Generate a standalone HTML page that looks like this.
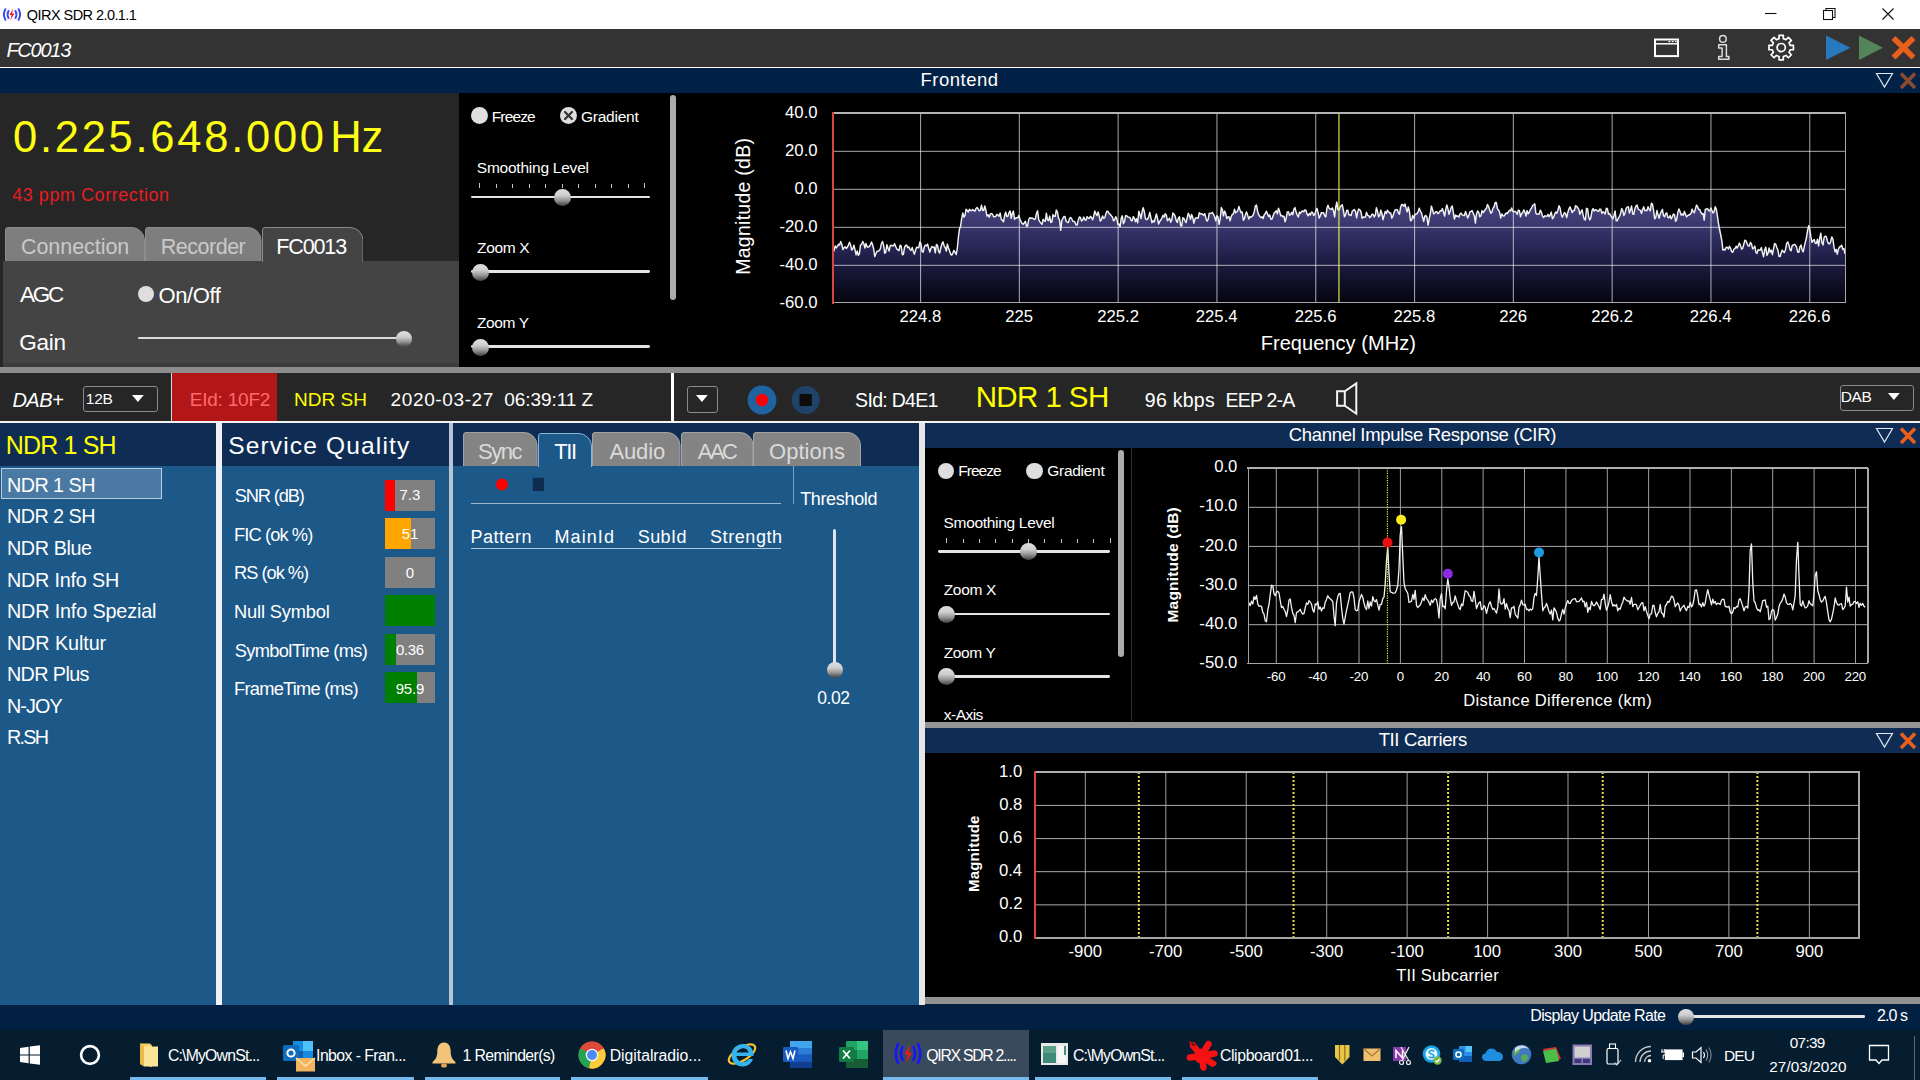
<!DOCTYPE html>
<html><head><meta charset="utf-8"><title>QIRX SDR</title>
<style>
html,body{margin:0;padding:0;background:#000;}
body{width:1920px;height:1080px;overflow:hidden;position:relative;font-family:"Liberation Sans",sans-serif;}
#r{position:absolute;left:0;top:0;width:1920px;height:1080px;overflow:hidden;}
#r div,#r span,#r svg{position:absolute;}
#r span{white-space:pre;line-height:1;display:block;}
.th{border-radius:50%;background:linear-gradient(180deg,#e0e0e0 0%,#cdcdcd 38%,#939393 68%,#585858 90%,#4a4a4a 100%);}
.rd{border-radius:50%;background:#dedede;}
</style></head><body><div id="r">
<div style="left:0px;top:0px;width:1920px;height:29px;background:#fff;"></div>
<div style="left:0px;top:29px;width:1920px;height:38px;background:#333333;"></div>
<div style="left:0px;top:67px;width:1920px;height:1px;background:#fff;"></div>
<div style="left:0px;top:68px;width:1920px;height:25px;background:#022146;"></div>
<div style="left:0px;top:93px;width:459px;height:274px;background:#262626;"></div>
<div style="left:459px;top:93px;width:1461px;height:274px;background:#000;"></div>
<div style="left:3px;top:261px;width:456px;height:106px;background:#444;"></div>
<div style="left:3px;top:363px;width:456px;height:4px;background:#3c3c3c;"></div>
<div style="left:0px;top:367px;width:1920px;height:6px;background:#8c8c8c;"></div>
<div style="left:0px;top:373px;width:1920px;height:48px;background:#262626;"></div>
<div style="left:0px;top:421px;width:1920px;height:1.6px;background:#f4f4f4;"></div>
<div style="left:671px;top:373px;width:3px;height:48px;background:#fff;"></div>
<div style="left:0px;top:423px;width:216px;height:43px;background:#0f2d54;"></div>
<div style="left:0px;top:466px;width:216px;height:539px;background:#1c5888;"></div>
<div style="left:216px;top:423px;width:6px;height:582px;background:#f0f0f5;"></div>
<div style="left:222px;top:423px;width:227px;height:43px;background:#0f2d54;"></div>
<div style="left:222px;top:466px;width:227px;height:539px;background:#1c5888;"></div>
<div style="left:449px;top:423px;width:4px;height:582px;background:#b9c3d6;"></div>
<div style="left:453px;top:423px;width:466px;height:43px;background:#0f2d54;"></div>
<div style="left:453px;top:466px;width:466px;height:539px;background:#1c5888;"></div>
<div style="left:919px;top:423px;width:6px;height:582px;background:#e6e6e8;"></div>
<div style="left:925px;top:423px;width:995px;height:25px;background:#0f2d54;"></div>
<div style="left:925px;top:448px;width:995px;height:273px;background:#000;"></div>
<div style="left:925px;top:722px;width:995px;height:6px;background:#949494;"></div>
<div style="left:925px;top:728px;width:995px;height:25px;background:#0f2d54;"></div>
<div style="left:925px;top:753px;width:995px;height:244px;background:#000;"></div>
<div style="left:925px;top:997px;width:995px;height:7px;background:#929292;"></div>
<div style="left:0px;top:1005px;width:925px;height:25px;background:#022142;"></div>
<div style="left:925px;top:1004px;width:995px;height:26px;background:#022142;"></div>
<div style="left:0px;top:1030px;width:1920px;height:50px;background:#061d2f;"></div>
<svg style="left:2px;top:7.5px;" width="20" height="13" viewBox="0 0 20 13"><g fill="none" stroke="#3c4cf2" stroke-width="2" stroke-linecap="round"><path d="M6.5 3 Q4.6 6.5 6.5 10"/><path d="M3.4 1.2 Q0.4 6.5 3.4 11.8"/><path d="M13.500 3 Q15.400 6.500 13.500 10"/><path d="M16.600 1.200 Q19.600 6.500 16.600 11.800"/></g><path d="M11.2 0.6 L7.4 7.1 L9.7 7.1 L8.2 12.4 L12.4 5.500 L10 5.500 Z" fill="#f01818"/></svg>
<span style="left:26.85px;top:8.00px;font-size:14.5px;color:#000;letter-spacing:-0.560px;">QIRX SDR 2.0.1.1</span>
<svg style="left:1760px;top:4px;" width="140" height="22" viewBox="0 0 140 22"><g stroke="#111" stroke-width="1.1" fill="none"><path d="M5 9.5 H16.5"/><rect x="63.5" y="6.5" width="9" height="9"/><path d="M66 6.5 V4.5 H75 V13.5 H72.5"/><path d="M122.5 4.5 L133.5 15.5 M133.5 4.5 L122.5 15.5"/></g></svg>
<span style="left:6.40px;top:40.00px;font-size:20px;color:#fff;letter-spacing:-1.236px;font-style:italic;">FC0013</span>
<svg style="left:1652px;top:36px;" width="30" height="24" viewBox="0 0 30 24"><g fill="none" stroke="#fff"><rect x="3" y="3.5" width="23" height="16.6" stroke-width="2"/><path d="M3 7.8 H26" stroke-width="1.5"/></g><path d="M16.5 5.6 h1.8 M19.8 5.6 h1.8 M23 5.6 h1.5" stroke="#fff" stroke-width="1.1"/></svg>
<svg style="left:1714px;top:33px;" width="20" height="30" viewBox="0 0 20 30"><g fill="none" stroke="#ddd" stroke-width="1.5" stroke-linejoin="round"><circle cx="8.9" cy="5.9" r="3.3"/><path d="M4.7 11.8 H12.4 V23.4 H14.9 V26.2 H4.7 V23.4 H8.1 V15 H4.7 Z"/></g></svg>
<svg style="left:1766px;top:33px;" width="30" height="30" viewBox="0 0 30 30"><path d="M13.07 2.38 L17.33 2.38 L17.35 5.65 L20.01 6.76 L22.33 4.45 L25.35 7.47 L23.04 9.79 L24.15 12.45 L27.42 12.47 L27.42 16.73 L24.15 16.75 L23.04 19.41 L25.35 21.73 L22.33 24.75 L20.01 22.44 L17.35 23.55 L17.33 26.82 L13.07 26.82 L13.05 23.55 L10.39 22.44 L8.07 24.75 L5.05 21.73 L7.36 19.41 L6.25 16.75 L2.98 16.73 L2.98 12.47 L6.25 12.45 L7.36 9.79 L5.05 7.47 L8.07 4.45 L10.39 6.76 L13.05 5.65 Z" fill="none" stroke="#fff" stroke-width="1.7" stroke-linejoin="round"/><circle cx="15.2" cy="14.6" r="4.1" fill="none" stroke="#fff" stroke-width="1.7"/></svg>
<svg style="left:1824px;top:33px;" width="96" height="30" viewBox="0 0 96 30"><path d="M2 2.6 L26.5 14.8 L2 27 Z" fill="#2878be"/><path d="M35 2.6 L59 14.8 L35 27 Z" fill="#54855a"/><path d="M69.5 5 L89.5 24.6 M89.5 5 L69.5 24.6" stroke="#e8601c" stroke-width="5.6" stroke-linecap="butt"/></svg>
<span style="left:920.52px;top:71.00px;font-size:18.5px;color:#fff;letter-spacing:0.509px;">Frontend</span>
<svg style="left:1874px;top:71px;" width="46" height="20" viewBox="0 0 46 20"><path d="M2.5 2.5 H18.5 L10.5 16 Z" fill="none" stroke="#dfe8f4" stroke-width="1.2"/><path d="M27 2.5 L41 17 M41 2.5 L27 17" stroke="#8a4a30" stroke-width="3.6"/></svg>
<svg style="left:1874px;top:425.5px;" width="46" height="20" viewBox="0 0 46 20"><path d="M2.5 2.5 H18.5 L10.5 16 Z" fill="none" stroke="#dfe8f4" stroke-width="1.2"/><path d="M27 2.5 L41 17 M41 2.5 L27 17" stroke="#e8601c" stroke-width="3.6"/></svg>
<svg style="left:1874px;top:730.5px;" width="46" height="20" viewBox="0 0 46 20"><path d="M2.5 2.5 H18.5 L10.5 16 Z" fill="none" stroke="#dfe8f4" stroke-width="1.2"/><path d="M27 2.5 L41 17 M41 2.5 L27 17" stroke="#e8601c" stroke-width="3.6"/></svg>
<span style="left:12.98px;top:116.00px;font-size:43.5px;color:#ffff14;letter-spacing:2.742px;">0.225.648.000</span>
<span style="left:330.27px;top:116.00px;font-size:43.5px;color:#ffff14;letter-spacing:-0.228px;">Hz</span>
<span style="left:12.14px;top:186.00px;font-size:18px;color:#e81c24;letter-spacing:0.555px;">43 ppm Correction</span>
<svg style="left:5px;top:227px;" width="140" height="34" viewBox="0 0 140 34"><path d="M0.5 34 V3 Q0.5 0.5 3 0.5 H127 A13 13 0 0 1 139.5 13 V34" fill="#7e7e7e" stroke="#8c8c8c" stroke-width="1"/></svg>
<svg style="left:145px;top:227px;" width="116.5" height="34" viewBox="0 0 116.5 34"><path d="M0.5 34 V3 Q0.5 0.5 3 0.5 H103.5 A13 13 0 0 1 116.0 13 V34" fill="#7e7e7e" stroke="#8c8c8c" stroke-width="1"/></svg>
<svg style="left:261.5px;top:227px;" width="101.5" height="35" viewBox="0 0 101.5 35"><path d="M0.5 35 V3 Q0.5 0.5 3 0.5 H88.5 A13 13 0 0 1 101.0 13 V35" fill="#444" stroke="#8a8a8a" stroke-width="1"/></svg>
<span style="left:20.93px;top:237.00px;font-size:21.5px;color:#c9c9c9;letter-spacing:-0.043px;">Connection</span>
<span style="left:160.78px;top:237.00px;font-size:21.5px;color:#c9c9c9;letter-spacing:-0.490px;">Recorder</span>
<span style="left:276.28px;top:237.00px;font-size:21.5px;color:#fff;letter-spacing:-1.127px;">FC0013</span>
<span style="left:20.00px;top:284.00px;font-size:22.5px;color:#fff;letter-spacing:-2.261px;">AGC</span>
<div class="rd" style="left:137.7px;top:286.1px;width:16.2px;height:16.2px"></div>
<span style="left:158.51px;top:285.00px;font-size:22px;color:#fff;letter-spacing:-0.421px;">On/Off</span>
<span style="left:19.18px;top:332.00px;font-size:22.5px;color:#fff;letter-spacing:-0.209px;">Gain</span>
<div style="left:138px;top:336.6px;width:266px;height:2.8px;background:#dcdcdc;border-radius:1.4px;"></div>
<div class="th" style="left:395.8px;top:330.5px;width:16px;height:16px"></div>
<div class="rd" style="left:470.5px;top:107.1px;width:17px;height:17px"></div>
<span style="left:491.76px;top:109.00px;font-size:15.5px;color:#fff;letter-spacing:-0.873px;">Freeze</span>
<div class="rd" style="left:559.5px;top:107.1px;width:17px;height:17px"></div>
<svg style="left:559.5px;top:107.1px;" width="17" height="17" viewBox="0 0 17 17"><path d="M5 5 L12 12 M12 5 L5 12" stroke="#333" stroke-width="2.2" stroke-linecap="round"/></svg>
<span style="left:580.98px;top:109.00px;font-size:15.5px;color:#fff;letter-spacing:-0.233px;">Gradient</span>
<span style="left:476.80px;top:160.00px;font-size:15.5px;color:#fff;letter-spacing:-0.236px;">Smoothing Level</span>
<div style="left:479.0px;top:182.6px;width:1px;height:5.4px;background:#c4c4c4;"></div>
<div style="left:495.5px;top:184.2px;width:1px;height:3.8px;background:#c4c4c4;"></div>
<div style="left:512.0px;top:184.2px;width:1px;height:3.8px;background:#c4c4c4;"></div>
<div style="left:528.5px;top:184.2px;width:1px;height:3.8px;background:#c4c4c4;"></div>
<div style="left:545.0px;top:184.2px;width:1px;height:3.8px;background:#c4c4c4;"></div>
<div style="left:561.5px;top:184.2px;width:1px;height:3.8px;background:#c4c4c4;"></div>
<div style="left:578.0px;top:184.2px;width:1px;height:3.8px;background:#c4c4c4;"></div>
<div style="left:594.5px;top:184.2px;width:1px;height:3.8px;background:#c4c4c4;"></div>
<div style="left:611.0px;top:184.2px;width:1px;height:3.8px;background:#c4c4c4;"></div>
<div style="left:627.5px;top:184.2px;width:1px;height:3.8px;background:#c4c4c4;"></div>
<div style="left:644.0px;top:182.6px;width:1px;height:5.4px;background:#c4c4c4;"></div>
<div style="left:471px;top:195.5px;width:179px;height:2.8px;background:#e4e4e4;border-radius:1.4px;"></div>
<div class="th" style="left:553.5px;top:188.9px;width:17px;height:17px"></div>
<span style="left:477.04px;top:240.00px;font-size:15.5px;color:#fff;letter-spacing:-0.358px;">Zoom X</span>
<div style="left:471px;top:270.40000000000003px;width:179px;height:2.8px;background:#e4e4e4;border-radius:1.4px;"></div>
<div class="th" style="left:471.5px;top:263.8px;width:17px;height:17px"></div>
<span style="left:477.04px;top:315.00px;font-size:15.5px;color:#fff;letter-spacing:-0.392px;">Zoom Y</span>
<div style="left:471px;top:345.40000000000003px;width:179px;height:2.8px;background:#e4e4e4;border-radius:1.4px;"></div>
<div class="th" style="left:471.5px;top:338.8px;width:17px;height:17px"></div>
<div style="left:670px;top:95px;width:6px;height:205px;background:#ababab;border-radius:3px;"></div>
<svg style="left:833px;top:113px;" width="1012" height="189.5" viewBox="0 0 1012 189.5"><defs><linearGradient id="g1" gradientUnits="userSpaceOnUse" x1="0" y1="92" x2="0" y2="189.5"><stop offset="0.000" stop-color="rgb(72,69,130)"/><stop offset="0.164" stop-color="rgb(60,58,112)"/><stop offset="0.400" stop-color="rgb(42,40,88)"/><stop offset="0.564" stop-color="rgb(30,29,68)"/><stop offset="0.677" stop-color="rgb(24,23,55)"/><stop offset="0.821" stop-color="rgb(14,14,36)"/><stop offset="1.000" stop-color="rgb(5,5,16)"/></linearGradient></defs><polygon points="0,189.5 0.0,139.0 1.1,137.5 2.2,132.9 3.3,134.9 4.4,133.4 5.5,131.2 6.6,132.1 7.7,128.4 8.8,131.2 9.9,136.6 11.0,134.8 12.1,133.8 13.2,135.4 14.3,134.4 15.4,132.1 16.5,129.2 17.6,132.1 18.7,137.1 19.8,135.9 20.9,132.2 22.0,136.8 23.1,141.9 24.2,138.0 25.3,142.2 26.4,140.8 27.5,131.9 28.6,131.6 29.7,128.5 30.8,130.5 31.9,135.0 33.0,130.6 34.1,133.8 35.2,134.2 36.3,133.5 37.4,131.8 38.5,129.0 39.6,131.8 40.7,136.2 41.8,143.6 42.9,140.7 44.0,138.2 45.1,138.2 46.2,137.6 47.3,135.8 48.4,130.7 49.5,128.5 50.6,132.4 51.7,140.3 52.8,139.2 53.9,131.7 55.0,135.3 56.1,138.1 57.2,132.7 58.3,132.3 59.4,132.8 60.5,132.9 61.6,130.7 62.7,133.4 63.8,136.0 64.9,137.0 66.0,137.6 67.1,132.2 68.2,133.0 69.3,141.7 70.4,141.3 71.5,134.3 72.6,132.5 73.7,132.1 74.8,134.7 75.9,133.9 77.0,136.5 78.1,137.4 79.2,134.5 80.3,138.4 81.4,141.3 82.5,137.3 83.6,134.3 84.7,134.5 85.8,134.7 86.9,128.9 88.0,131.0 89.1,138.7 90.2,139.1 91.3,133.8 92.4,132.1 93.5,132.8 94.6,131.1 95.7,135.3 96.8,139.1 97.9,135.5 99.0,133.5 100.1,134.6 101.2,134.0 102.3,139.8 103.4,131.5 104.5,132.3 105.6,138.2 106.7,140.1 107.8,134.7 108.9,130.9 110.0,128.8 111.1,132.8 112.2,134.5 113.3,138.1 114.4,131.1 115.5,134.9 116.6,138.1 117.7,141.3 118.8,142.1 119.9,139.9 121.0,137.3 122.1,139.4 123.2,141.5 124.3,135.3 125.4,124.0 126.5,115.9 127.6,113.0 128.7,105.4 129.8,99.9 130.9,104.0 132.0,102.6 133.1,96.3 134.2,97.5 135.3,98.9 136.4,96.2 137.5,97.5 138.6,97.6 139.7,96.6 140.8,97.5 141.9,98.1 143.0,95.5 144.1,94.4 145.2,96.0 146.3,97.9 147.4,97.2 148.5,92.2 149.6,97.4 150.7,97.3 151.8,93.0 152.9,97.4 154.0,103.1 155.1,101.7 156.2,104.2 157.3,100.9 158.4,100.5 159.5,101.2 160.6,103.8 161.7,103.7 162.8,103.3 163.9,101.3 165.0,102.0 166.1,103.3 167.2,100.1 168.3,106.5 169.4,107.1 170.5,109.0 171.6,102.7 172.7,99.1 173.8,103.6 174.9,103.4 176.0,99.8 177.1,97.9 178.2,105.3 179.3,100.5 180.4,98.1 181.5,106.2 182.6,105.2 183.7,104.8 184.8,104.9 185.9,102.4 187.0,106.3 188.1,108.9 189.2,110.5 190.3,111.3 191.4,109.8 192.5,108.3 193.6,113.4 194.7,112.6 195.8,106.1 196.9,104.7 198.0,105.4 199.1,105.0 200.2,105.7 201.3,106.4 202.4,105.8 203.5,100.2 204.6,97.8 205.7,106.6 206.8,108.8 207.9,110.1 209.0,111.3 210.1,106.3 211.2,107.7 212.3,108.3 213.4,100.2 214.5,107.0 215.6,107.7 216.7,103.1 217.8,109.5 218.9,108.8 220.0,101.6 221.1,103.3 222.2,103.3 223.3,97.0 224.4,99.0 225.5,105.1 226.6,107.0 227.7,117.3 228.8,107.6 229.9,105.3 231.0,103.5 232.1,103.8 233.2,108.5 234.3,109.2 235.4,109.6 236.5,105.6 237.6,104.5 238.7,105.7 239.8,108.2 240.9,108.4 242.0,109.4 243.1,111.9 244.2,111.8 245.3,106.9 246.4,103.9 247.5,104.7 248.6,108.1 249.7,107.0 250.8,104.1 251.9,106.8 253.0,107.3 254.1,103.6 255.2,105.2 256.3,105.3 257.4,103.3 258.5,104.5 259.6,106.8 260.7,103.2 261.8,98.1 262.9,100.6 264.0,102.6 265.1,98.9 266.2,102.9 267.3,108.0 268.4,106.9 269.5,102.9 270.6,105.3 271.7,104.9 272.8,101.1 273.9,98.2 275.0,98.4 276.1,100.5 277.2,101.3 278.3,102.8 279.4,103.9 280.5,107.8 281.6,107.0 282.7,103.7 283.8,105.8 284.9,111.3 286.0,111.1 287.1,113.6 288.2,105.3 289.3,102.8 290.4,110.7 291.5,108.7 292.6,102.7 293.7,102.7 294.8,103.9 295.9,104.3 297.0,104.4 298.1,107.5 299.2,107.7 300.3,103.6 301.4,105.1 302.5,108.8 303.6,105.8 304.7,109.7 305.8,98.2 306.9,101.2 308.0,105.6 309.1,98.8 310.2,94.7 311.3,98.6 312.4,105.5 313.5,106.7 314.6,106.1 315.7,103.7 316.8,99.5 317.9,104.9 319.0,109.8 320.1,107.6 321.2,109.1 322.3,105.0 323.4,100.9 324.5,105.4 325.6,111.0 326.7,108.5 327.8,107.0 328.9,105.1 330.0,102.3 331.1,104.2 332.2,100.8 333.3,101.9 334.4,107.7 335.5,106.6 336.6,105.1 337.7,109.3 338.8,107.0 339.9,100.1 341.0,101.2 342.1,103.1 343.2,107.4 344.3,109.5 345.4,104.9 346.5,103.8 347.6,112.5 348.7,113.0 349.8,104.8 350.9,105.4 352.0,107.8 353.1,109.6 354.2,104.6 355.3,100.3 356.4,102.5 357.5,106.3 358.6,101.5 359.7,104.2 360.8,110.2 361.9,106.2 363.0,104.7 364.1,105.0 365.2,105.0 366.3,99.7 367.4,100.9 368.5,100.6 369.6,101.4 370.7,102.3 371.8,100.6 372.9,105.2 374.0,108.2 375.1,106.6 376.2,100.3 377.3,100.4 378.4,100.1 379.5,99.5 380.6,101.6 381.7,104.0 382.8,107.9 383.9,102.7 385.0,104.0 386.1,111.4 387.2,105.9 388.3,94.5 389.4,96.9 390.5,102.8 391.6,98.1 392.7,100.3 393.8,105.6 394.9,103.9 396.0,103.8 397.1,107.9 398.2,103.7 399.3,101.4 400.4,100.8 401.5,96.2 402.6,99.7 403.7,99.0 404.8,97.6 405.9,93.4 407.0,96.9 408.1,99.8 409.2,98.9 410.3,107.2 411.4,105.7 412.5,101.4 413.6,98.9 414.7,102.4 415.8,106.1 416.9,103.5 418.0,104.3 419.1,103.3 420.2,102.0 421.3,98.4 422.4,92.8 423.5,92.1 424.6,98.2 425.7,101.6 426.8,103.4 427.9,104.6 429.0,103.7 430.1,105.6 431.2,101.8 432.3,100.6 433.4,98.2 434.5,100.7 435.6,103.6 436.7,101.9 437.8,106.1 438.9,106.2 440.0,103.2 441.1,100.1 442.2,99.0 443.3,97.7 444.4,100.8 445.5,95.2 446.6,98.4 447.7,102.8 448.8,102.4 449.9,103.7 451.0,103.3 452.1,108.8 453.2,105.2 454.3,98.9 455.4,98.8 456.5,102.2 457.6,101.6 458.7,99.3 459.8,101.7 460.9,95.9 462.0,94.6 463.1,99.1 464.2,102.0 465.3,104.0 466.4,99.1 467.5,100.3 468.6,98.7 469.7,97.9 470.8,98.8 471.9,96.8 473.0,97.3 474.1,101.2 475.2,102.8 476.3,100.5 477.4,102.0 478.5,99.1 479.6,99.4 480.7,102.4 481.8,101.2 482.9,97.5 484.0,95.4 485.1,99.6 486.2,105.1 487.3,102.8 488.4,99.6 489.5,100.0 490.6,99.8 491.7,103.0 492.8,103.8 493.9,95.3 495.0,92.3 496.1,95.3 497.2,95.8 498.3,96.4 499.4,94.9 500.5,97.9 501.6,103.9 502.7,94.5 503.8,89.1 504.9,96.6 506.0,97.0 507.1,94.2 508.2,92.6 509.3,91.8 510.4,97.5 511.5,103.8 512.6,101.6 513.7,97.5 514.8,97.2 515.9,101.8 517.0,101.8 518.1,102.6 519.2,98.3 520.3,97.3 521.4,96.5 522.5,98.4 523.6,104.9 524.7,98.9 525.8,96.1 526.9,96.8 528.0,98.8 529.1,105.2 530.2,104.0 531.3,104.3 532.4,104.1 533.5,99.2 534.6,102.2 535.7,102.6 536.8,104.6 537.9,103.4 539.0,101.3 540.1,101.2 541.2,104.0 542.3,102.1 543.4,94.7 544.5,98.3 545.6,103.8 546.7,102.6 547.8,97.1 548.9,100.5 550.0,106.7 551.1,102.6 552.2,98.5 553.3,100.4 554.4,97.2 555.5,98.8 556.6,100.0 557.7,99.9 558.8,105.2 559.9,103.2 561.0,99.6 562.1,97.0 563.2,96.6 564.3,96.8 565.4,100.1 566.5,101.2 567.6,94.2 568.7,91.5 569.8,91.8 570.9,93.3 572.0,91.0 573.1,95.4 574.2,98.9 575.3,94.0 576.4,98.2 577.5,107.7 578.6,107.4 579.7,102.4 580.8,105.2 581.9,101.6 583.0,101.0 584.1,100.7 585.2,98.6 586.3,95.3 587.4,98.3 588.5,99.9 589.6,104.2 590.7,108.4 591.8,103.1 592.9,102.5 594.0,104.4 595.1,112.1 596.2,105.8 597.3,100.6 598.4,93.1 599.5,96.4 600.6,100.8 601.7,100.3 602.8,98.7 603.9,98.7 605.0,100.7 606.1,99.7 607.2,97.8 608.3,98.0 609.4,95.6 610.5,99.0 611.6,103.1 612.7,96.6 613.8,91.9 614.9,95.6 616.0,101.3 617.1,98.1 618.2,94.5 619.3,93.0 620.4,100.0 621.5,106.0 622.6,102.0 623.7,103.3 624.8,103.0 625.9,104.1 627.0,100.8 628.1,100.2 629.2,101.9 630.3,102.4 631.4,102.5 632.5,98.6 633.6,101.8 634.7,104.9 635.8,102.6 636.9,98.8 638.0,98.3 639.1,97.6 640.2,100.2 641.3,102.7 642.4,110.1 643.5,100.7 644.6,98.0 645.7,99.3 646.8,103.8 647.9,102.8 649.0,97.6 650.1,99.7 651.2,98.3 652.3,96.5 653.4,95.2 654.5,91.5 655.6,93.6 656.7,96.9 657.8,100.3 658.9,99.0 660.0,95.1 661.1,93.8 662.2,89.5 663.3,89.4 664.4,95.7 665.5,96.9 666.6,99.2 667.7,105.1 668.8,100.9 669.9,102.9 671.0,103.0 672.1,101.5 673.2,100.0 674.3,100.5 675.4,99.0 676.5,97.2 677.6,97.9 678.7,95.0 679.8,98.4 680.9,98.8 682.0,98.3 683.1,99.2 684.2,101.4 685.3,97.2 686.4,97.5 687.5,103.8 688.6,100.8 689.7,99.6 690.8,96.9 691.9,99.3 693.0,103.0 694.1,97.6 695.2,100.7 696.3,99.3 697.4,96.4 698.5,95.2 699.6,92.5 700.7,91.8 701.8,90.9 702.9,100.3 704.0,101.2 705.1,101.0 706.2,101.0 707.3,97.2 708.4,99.2 709.5,103.1 710.6,104.5 711.7,102.8 712.8,103.1 713.9,103.3 715.0,101.3 716.1,103.7 717.2,102.0 718.3,99.1 719.4,105.7 720.5,104.6 721.6,101.6 722.7,98.9 723.8,100.2 724.9,97.2 726.0,92.7 727.1,95.1 728.2,101.4 729.3,104.2 730.4,101.8 731.5,99.5 732.6,100.9 733.7,104.6 734.8,99.4 735.9,96.1 737.0,93.8 738.1,96.6 739.2,99.6 740.3,97.4 741.4,97.5 742.5,92.7 743.6,93.3 744.7,94.7 745.8,96.4 746.9,101.3 748.0,98.9 749.1,96.8 750.2,102.6 751.3,106.3 752.4,107.0 753.5,95.3 754.6,95.9 755.7,104.1 756.8,106.9 757.9,104.6 759.0,97.7 760.1,95.6 761.2,98.1 762.3,96.7 763.4,96.9 764.5,98.1 765.6,98.4 766.7,96.1 767.8,96.3 768.9,100.4 770.0,98.8 771.1,99.4 772.2,101.0 773.3,95.3 774.4,95.6 775.5,101.2 776.6,100.5 777.7,102.7 778.8,104.2 779.9,105.9 781.0,102.5 782.1,98.0 783.2,107.8 784.3,107.8 785.4,105.0 786.5,103.3 787.6,100.5 788.7,95.5 789.8,97.6 790.9,102.5 792.0,100.0 793.1,95.4 794.2,94.1 795.3,93.7 796.4,100.1 797.5,96.7 798.6,93.0 799.7,101.0 800.8,101.3 801.9,95.5 803.0,93.1 804.1,92.1 805.2,96.0 806.3,96.8 807.4,97.3 808.5,100.4 809.6,96.5 810.7,93.8 811.8,97.6 812.9,97.4 814.0,97.5 815.1,93.7 816.2,96.4 817.3,97.7 818.4,90.2 819.5,91.1 820.6,97.7 821.7,105.8 822.8,104.5 823.9,97.5 825.0,101.6 826.1,105.3 827.2,101.0 828.3,98.6 829.4,96.5 830.5,102.7 831.6,103.8 832.7,100.6 833.8,99.9 834.9,104.6 836.0,104.8 837.1,102.5 838.2,105.7 839.3,103.8 840.4,101.0 841.5,101.7 842.6,108.3 843.7,106.4 844.8,99.8 845.9,96.0 847.0,98.4 848.1,102.1 849.2,101.1 850.3,102.2 851.4,98.5 852.5,101.2 853.6,103.9 854.7,102.6 855.8,102.0 856.9,101.5 858.0,100.5 859.1,96.1 860.2,98.7 861.3,99.7 862.4,95.9 863.5,92.1 864.6,93.7 865.7,96.4 866.8,96.4 867.9,99.4 869.0,101.0 870.1,100.5 871.2,107.1 872.3,96.1 873.4,96.0 874.5,95.6 875.6,97.3 876.7,98.1 877.8,94.9 878.9,97.5 880.0,100.0 881.1,98.8 882.2,93.7 883.3,96.1 884.4,102.8 885.5,110.6 886.6,116.5 887.7,122.0 888.8,127.4 889.9,137.1 891.0,136.4 892.1,137.0 893.2,134.2 894.3,134.4 895.4,135.9 896.5,133.2 897.6,135.5 898.7,138.8 899.8,139.3 900.9,136.2 902.0,135.7 903.1,133.2 904.2,135.1 905.3,132.8 906.4,130.1 907.5,132.6 908.6,136.0 909.7,135.4 910.8,131.3 911.9,127.2 913.0,127.8 914.1,130.6 915.2,132.9 916.3,133.1 917.4,129.4 918.5,130.9 919.6,135.8 920.7,135.0 921.8,133.1 922.9,139.3 924.0,140.4 925.1,136.6 926.2,137.3 927.3,137.1 928.4,134.6 929.5,139.9 930.6,143.7 931.7,136.7 932.8,134.1 933.9,142.5 935.0,140.4 936.1,135.0 937.2,139.2 938.3,137.2 939.4,141.7 940.5,135.9 941.6,130.5 942.7,131.2 943.8,134.4 944.9,137.1 946.0,143.4 947.1,143.6 948.2,139.6 949.3,137.1 950.4,138.8 951.5,139.6 952.6,136.0 953.7,130.2 954.8,128.9 955.9,131.7 957.0,136.7 958.1,137.7 959.2,132.5 960.3,132.0 961.4,131.3 962.5,132.3 963.6,134.1 964.7,139.1 965.8,139.3 966.9,133.9 968.0,132.0 969.1,136.9 970.2,138.8 971.3,133.6 972.4,128.8 973.5,124.3 974.6,117.3 975.7,112.7 976.8,116.6 977.9,123.9 979.0,129.3 980.1,127.8 981.2,126.5 982.3,130.4 983.4,130.3 984.5,126.2 985.6,132.9 986.7,125.3 987.8,120.2 988.9,129.8 990.0,132.0 991.1,124.5 992.2,123.1 993.3,123.6 994.4,128.0 995.5,130.6 996.6,130.9 997.7,128.5 998.8,123.9 999.9,126.0 1001.0,134.2 1002.1,138.9 1003.2,136.4 1004.3,141.2 1005.4,136.1 1006.5,134.0 1007.6,133.5 1008.7,132.2 1009.8,136.4 1010.9,135.5 1012.0,140.9 1012,189.5" fill="url(#g1)"/><rect x="87.0" y="0" width="1.1" height="189.5" fill="#fff" fill-opacity="0.6"/><rect x="185.8" y="0" width="1.1" height="189.5" fill="#fff" fill-opacity="0.6"/><rect x="284.6" y="0" width="1.1" height="189.5" fill="#fff" fill-opacity="0.6"/><rect x="383.4" y="0" width="1.1" height="189.5" fill="#fff" fill-opacity="0.6"/><rect x="482.2" y="0" width="1.1" height="189.5" fill="#fff" fill-opacity="0.6"/><rect x="581.0" y="0" width="1.1" height="189.5" fill="#fff" fill-opacity="0.6"/><rect x="679.8" y="0" width="1.1" height="189.5" fill="#fff" fill-opacity="0.6"/><rect x="778.6" y="0" width="1.1" height="189.5" fill="#fff" fill-opacity="0.6"/><rect x="877.4" y="0" width="1.1" height="189.5" fill="#fff" fill-opacity="0.6"/><rect x="976.2" y="0" width="1.1" height="189.5" fill="#fff" fill-opacity="0.6"/><rect x="0" y="37.8" width="1012" height="1.1" fill="#fff" fill-opacity="0.6"/><rect x="0" y="75.8" width="1012" height="1.1" fill="#fff" fill-opacity="0.6"/><rect x="0" y="113.8" width="1012" height="1.1" fill="#fff" fill-opacity="0.6"/><rect x="0" y="151.8" width="1012" height="1.1" fill="#fff" fill-opacity="0.6"/><polyline points="0.0,139.0 1.1,137.5 2.2,132.9 3.3,134.9 4.4,133.4 5.5,131.2 6.6,132.1 7.7,128.4 8.8,131.2 9.9,136.6 11.0,134.8 12.1,133.8 13.2,135.4 14.3,134.4 15.4,132.1 16.5,129.2 17.6,132.1 18.7,137.1 19.8,135.9 20.9,132.2 22.0,136.8 23.1,141.9 24.2,138.0 25.3,142.2 26.4,140.8 27.5,131.9 28.6,131.6 29.7,128.5 30.8,130.5 31.9,135.0 33.0,130.6 34.1,133.8 35.2,134.2 36.3,133.5 37.4,131.8 38.5,129.0 39.6,131.8 40.7,136.2 41.8,143.6 42.9,140.7 44.0,138.2 45.1,138.2 46.2,137.6 47.3,135.8 48.4,130.7 49.5,128.5 50.6,132.4 51.7,140.3 52.8,139.2 53.9,131.7 55.0,135.3 56.1,138.1 57.2,132.7 58.3,132.3 59.4,132.8 60.5,132.9 61.6,130.7 62.7,133.4 63.8,136.0 64.9,137.0 66.0,137.6 67.1,132.2 68.2,133.0 69.3,141.7 70.4,141.3 71.5,134.3 72.6,132.5 73.7,132.1 74.8,134.7 75.9,133.9 77.0,136.5 78.1,137.4 79.2,134.5 80.3,138.4 81.4,141.3 82.5,137.3 83.6,134.3 84.7,134.5 85.8,134.7 86.9,128.9 88.0,131.0 89.1,138.7 90.2,139.1 91.3,133.8 92.4,132.1 93.5,132.8 94.6,131.1 95.7,135.3 96.8,139.1 97.9,135.5 99.0,133.5 100.1,134.6 101.2,134.0 102.3,139.8 103.4,131.5 104.5,132.3 105.6,138.2 106.7,140.1 107.8,134.7 108.9,130.9 110.0,128.8 111.1,132.8 112.2,134.5 113.3,138.1 114.4,131.1 115.5,134.9 116.6,138.1 117.7,141.3 118.8,142.1 119.9,139.9 121.0,137.3 122.1,139.4 123.2,141.5 124.3,135.3 125.4,124.0 126.5,115.9 127.6,113.0 128.7,105.4 129.8,99.9 130.9,104.0 132.0,102.6 133.1,96.3 134.2,97.5 135.3,98.9 136.4,96.2 137.5,97.5 138.6,97.6 139.7,96.6 140.8,97.5 141.9,98.1 143.0,95.5 144.1,94.4 145.2,96.0 146.3,97.9 147.4,97.2 148.5,92.2 149.6,97.4 150.7,97.3 151.8,93.0 152.9,97.4 154.0,103.1 155.1,101.7 156.2,104.2 157.3,100.9 158.4,100.5 159.5,101.2 160.6,103.8 161.7,103.7 162.8,103.3 163.9,101.3 165.0,102.0 166.1,103.3 167.2,100.1 168.3,106.5 169.4,107.1 170.5,109.0 171.6,102.7 172.7,99.1 173.8,103.6 174.9,103.4 176.0,99.8 177.1,97.9 178.2,105.3 179.3,100.5 180.4,98.1 181.5,106.2 182.6,105.2 183.7,104.8 184.8,104.9 185.9,102.4 187.0,106.3 188.1,108.9 189.2,110.5 190.3,111.3 191.4,109.8 192.5,108.3 193.6,113.4 194.7,112.6 195.8,106.1 196.9,104.7 198.0,105.4 199.1,105.0 200.2,105.7 201.3,106.4 202.4,105.8 203.5,100.2 204.6,97.8 205.7,106.6 206.8,108.8 207.9,110.1 209.0,111.3 210.1,106.3 211.2,107.7 212.3,108.3 213.4,100.2 214.5,107.0 215.6,107.7 216.7,103.1 217.8,109.5 218.9,108.8 220.0,101.6 221.1,103.3 222.2,103.3 223.3,97.0 224.4,99.0 225.5,105.1 226.6,107.0 227.7,117.3 228.8,107.6 229.9,105.3 231.0,103.5 232.1,103.8 233.2,108.5 234.3,109.2 235.4,109.6 236.5,105.6 237.6,104.5 238.7,105.7 239.8,108.2 240.9,108.4 242.0,109.4 243.1,111.9 244.2,111.8 245.3,106.9 246.4,103.9 247.5,104.7 248.6,108.1 249.7,107.0 250.8,104.1 251.9,106.8 253.0,107.3 254.1,103.6 255.2,105.2 256.3,105.3 257.4,103.3 258.5,104.5 259.6,106.8 260.7,103.2 261.8,98.1 262.9,100.6 264.0,102.6 265.1,98.9 266.2,102.9 267.3,108.0 268.4,106.9 269.5,102.9 270.6,105.3 271.7,104.9 272.8,101.1 273.9,98.2 275.0,98.4 276.1,100.5 277.2,101.3 278.3,102.8 279.4,103.9 280.5,107.8 281.6,107.0 282.7,103.7 283.8,105.8 284.9,111.3 286.0,111.1 287.1,113.6 288.2,105.3 289.3,102.8 290.4,110.7 291.5,108.7 292.6,102.7 293.7,102.7 294.8,103.9 295.9,104.3 297.0,104.4 298.1,107.5 299.2,107.7 300.3,103.6 301.4,105.1 302.5,108.8 303.6,105.8 304.7,109.7 305.8,98.2 306.9,101.2 308.0,105.6 309.1,98.8 310.2,94.7 311.3,98.6 312.4,105.5 313.5,106.7 314.6,106.1 315.7,103.7 316.8,99.5 317.9,104.9 319.0,109.8 320.1,107.6 321.2,109.1 322.3,105.0 323.4,100.9 324.5,105.4 325.6,111.0 326.7,108.5 327.8,107.0 328.9,105.1 330.0,102.3 331.1,104.2 332.2,100.8 333.3,101.9 334.4,107.7 335.5,106.6 336.6,105.1 337.7,109.3 338.8,107.0 339.9,100.1 341.0,101.2 342.1,103.1 343.2,107.4 344.3,109.5 345.4,104.9 346.5,103.8 347.6,112.5 348.7,113.0 349.8,104.8 350.9,105.4 352.0,107.8 353.1,109.6 354.2,104.6 355.3,100.3 356.4,102.5 357.5,106.3 358.6,101.5 359.7,104.2 360.8,110.2 361.9,106.2 363.0,104.7 364.1,105.0 365.2,105.0 366.3,99.7 367.4,100.9 368.5,100.6 369.6,101.4 370.7,102.3 371.8,100.6 372.9,105.2 374.0,108.2 375.1,106.6 376.2,100.3 377.3,100.4 378.4,100.1 379.5,99.5 380.6,101.6 381.7,104.0 382.8,107.9 383.9,102.7 385.0,104.0 386.1,111.4 387.2,105.9 388.3,94.5 389.4,96.9 390.5,102.8 391.6,98.1 392.7,100.3 393.8,105.6 394.9,103.9 396.0,103.8 397.1,107.9 398.2,103.7 399.3,101.4 400.4,100.8 401.5,96.2 402.6,99.7 403.7,99.0 404.8,97.6 405.9,93.4 407.0,96.9 408.1,99.8 409.2,98.9 410.3,107.2 411.4,105.7 412.5,101.4 413.6,98.9 414.7,102.4 415.8,106.1 416.9,103.5 418.0,104.3 419.1,103.3 420.2,102.0 421.3,98.4 422.4,92.8 423.5,92.1 424.6,98.2 425.7,101.6 426.8,103.4 427.9,104.6 429.0,103.7 430.1,105.6 431.2,101.8 432.3,100.6 433.4,98.2 434.5,100.7 435.6,103.6 436.7,101.9 437.8,106.1 438.9,106.2 440.0,103.2 441.1,100.1 442.2,99.0 443.3,97.7 444.4,100.8 445.5,95.2 446.6,98.4 447.7,102.8 448.8,102.4 449.9,103.7 451.0,103.3 452.1,108.8 453.2,105.2 454.3,98.9 455.4,98.8 456.5,102.2 457.6,101.6 458.7,99.3 459.8,101.7 460.9,95.9 462.0,94.6 463.1,99.1 464.2,102.0 465.3,104.0 466.4,99.1 467.5,100.3 468.6,98.7 469.7,97.9 470.8,98.8 471.9,96.8 473.0,97.3 474.1,101.2 475.2,102.8 476.3,100.5 477.4,102.0 478.5,99.1 479.6,99.4 480.7,102.4 481.8,101.2 482.9,97.5 484.0,95.4 485.1,99.6 486.2,105.1 487.3,102.8 488.4,99.6 489.5,100.0 490.6,99.8 491.7,103.0 492.8,103.8 493.9,95.3 495.0,92.3 496.1,95.3 497.2,95.8 498.3,96.4 499.4,94.9 500.5,97.9 501.6,103.9 502.7,94.5 503.8,89.1 504.9,96.6 506.0,97.0 507.1,94.2 508.2,92.6 509.3,91.8 510.4,97.5 511.5,103.8 512.6,101.6 513.7,97.5 514.8,97.2 515.9,101.8 517.0,101.8 518.1,102.6 519.2,98.3 520.3,97.3 521.4,96.5 522.5,98.4 523.6,104.9 524.7,98.9 525.8,96.1 526.9,96.8 528.0,98.8 529.1,105.2 530.2,104.0 531.3,104.3 532.4,104.1 533.5,99.2 534.6,102.2 535.7,102.6 536.8,104.6 537.9,103.4 539.0,101.3 540.1,101.2 541.2,104.0 542.3,102.1 543.4,94.7 544.5,98.3 545.6,103.8 546.7,102.6 547.8,97.1 548.9,100.5 550.0,106.7 551.1,102.6 552.2,98.5 553.3,100.4 554.4,97.2 555.5,98.8 556.6,100.0 557.7,99.9 558.8,105.2 559.9,103.2 561.0,99.6 562.1,97.0 563.2,96.6 564.3,96.8 565.4,100.1 566.5,101.2 567.6,94.2 568.7,91.5 569.8,91.8 570.9,93.3 572.0,91.0 573.1,95.4 574.2,98.9 575.3,94.0 576.4,98.2 577.5,107.7 578.6,107.4 579.7,102.4 580.8,105.2 581.9,101.6 583.0,101.0 584.1,100.7 585.2,98.6 586.3,95.3 587.4,98.3 588.5,99.9 589.6,104.2 590.7,108.4 591.8,103.1 592.9,102.5 594.0,104.4 595.1,112.1 596.2,105.8 597.3,100.6 598.4,93.1 599.5,96.4 600.6,100.8 601.7,100.3 602.8,98.7 603.9,98.7 605.0,100.7 606.1,99.7 607.2,97.8 608.3,98.0 609.4,95.6 610.5,99.0 611.6,103.1 612.7,96.6 613.8,91.9 614.9,95.6 616.0,101.3 617.1,98.1 618.2,94.5 619.3,93.0 620.4,100.0 621.5,106.0 622.6,102.0 623.7,103.3 624.8,103.0 625.9,104.1 627.0,100.8 628.1,100.2 629.2,101.9 630.3,102.4 631.4,102.5 632.5,98.6 633.6,101.8 634.7,104.9 635.8,102.6 636.9,98.8 638.0,98.3 639.1,97.6 640.2,100.2 641.3,102.7 642.4,110.1 643.5,100.7 644.6,98.0 645.7,99.3 646.8,103.8 647.9,102.8 649.0,97.6 650.1,99.7 651.2,98.3 652.3,96.5 653.4,95.2 654.5,91.5 655.6,93.6 656.7,96.9 657.8,100.3 658.9,99.0 660.0,95.1 661.1,93.8 662.2,89.5 663.3,89.4 664.4,95.7 665.5,96.9 666.6,99.2 667.7,105.1 668.8,100.9 669.9,102.9 671.0,103.0 672.1,101.5 673.2,100.0 674.3,100.5 675.4,99.0 676.5,97.2 677.6,97.9 678.7,95.0 679.8,98.4 680.9,98.8 682.0,98.3 683.1,99.2 684.2,101.4 685.3,97.2 686.4,97.5 687.5,103.8 688.6,100.8 689.7,99.6 690.8,96.9 691.9,99.3 693.0,103.0 694.1,97.6 695.2,100.7 696.3,99.3 697.4,96.4 698.5,95.2 699.6,92.5 700.7,91.8 701.8,90.9 702.9,100.3 704.0,101.2 705.1,101.0 706.2,101.0 707.3,97.2 708.4,99.2 709.5,103.1 710.6,104.5 711.7,102.8 712.8,103.1 713.9,103.3 715.0,101.3 716.1,103.7 717.2,102.0 718.3,99.1 719.4,105.7 720.5,104.6 721.6,101.6 722.7,98.9 723.8,100.2 724.9,97.2 726.0,92.7 727.1,95.1 728.2,101.4 729.3,104.2 730.4,101.8 731.5,99.5 732.6,100.9 733.7,104.6 734.8,99.4 735.9,96.1 737.0,93.8 738.1,96.6 739.2,99.6 740.3,97.4 741.4,97.5 742.5,92.7 743.6,93.3 744.7,94.7 745.8,96.4 746.9,101.3 748.0,98.9 749.1,96.8 750.2,102.6 751.3,106.3 752.4,107.0 753.5,95.3 754.6,95.9 755.7,104.1 756.8,106.9 757.9,104.6 759.0,97.7 760.1,95.6 761.2,98.1 762.3,96.7 763.4,96.9 764.5,98.1 765.6,98.4 766.7,96.1 767.8,96.3 768.9,100.4 770.0,98.8 771.1,99.4 772.2,101.0 773.3,95.3 774.4,95.6 775.5,101.2 776.6,100.5 777.7,102.7 778.8,104.2 779.9,105.9 781.0,102.5 782.1,98.0 783.2,107.8 784.3,107.8 785.4,105.0 786.5,103.3 787.6,100.5 788.7,95.5 789.8,97.6 790.9,102.5 792.0,100.0 793.1,95.4 794.2,94.1 795.3,93.7 796.4,100.1 797.5,96.7 798.6,93.0 799.7,101.0 800.8,101.3 801.9,95.5 803.0,93.1 804.1,92.1 805.2,96.0 806.3,96.8 807.4,97.3 808.5,100.4 809.6,96.5 810.7,93.8 811.8,97.6 812.9,97.4 814.0,97.5 815.1,93.7 816.2,96.4 817.3,97.7 818.4,90.2 819.5,91.1 820.6,97.7 821.7,105.8 822.8,104.5 823.9,97.5 825.0,101.6 826.1,105.3 827.2,101.0 828.3,98.6 829.4,96.5 830.5,102.7 831.6,103.8 832.7,100.6 833.8,99.9 834.9,104.6 836.0,104.8 837.1,102.5 838.2,105.7 839.3,103.8 840.4,101.0 841.5,101.7 842.6,108.3 843.7,106.4 844.8,99.8 845.9,96.0 847.0,98.4 848.1,102.1 849.2,101.1 850.3,102.2 851.4,98.5 852.5,101.2 853.6,103.9 854.7,102.6 855.8,102.0 856.9,101.5 858.0,100.5 859.1,96.1 860.2,98.7 861.3,99.7 862.4,95.9 863.5,92.1 864.6,93.7 865.7,96.4 866.8,96.4 867.9,99.4 869.0,101.0 870.1,100.5 871.2,107.1 872.3,96.1 873.4,96.0 874.5,95.6 875.6,97.3 876.7,98.1 877.8,94.9 878.9,97.5 880.0,100.0 881.1,98.8 882.2,93.7 883.3,96.1 884.4,102.8 885.5,110.6 886.6,116.5 887.7,122.0 888.8,127.4 889.9,137.1 891.0,136.4 892.1,137.0 893.2,134.2 894.3,134.4 895.4,135.9 896.5,133.2 897.6,135.5 898.7,138.8 899.8,139.3 900.9,136.2 902.0,135.7 903.1,133.2 904.2,135.1 905.3,132.8 906.4,130.1 907.5,132.6 908.6,136.0 909.7,135.4 910.8,131.3 911.9,127.2 913.0,127.8 914.1,130.6 915.2,132.9 916.3,133.1 917.4,129.4 918.5,130.9 919.6,135.8 920.7,135.0 921.8,133.1 922.9,139.3 924.0,140.4 925.1,136.6 926.2,137.3 927.3,137.1 928.4,134.6 929.5,139.9 930.6,143.7 931.7,136.7 932.8,134.1 933.9,142.5 935.0,140.4 936.1,135.0 937.2,139.2 938.3,137.2 939.4,141.7 940.5,135.9 941.6,130.5 942.7,131.2 943.8,134.4 944.9,137.1 946.0,143.4 947.1,143.6 948.2,139.6 949.3,137.1 950.4,138.8 951.5,139.6 952.6,136.0 953.7,130.2 954.8,128.9 955.9,131.7 957.0,136.7 958.1,137.7 959.2,132.5 960.3,132.0 961.4,131.3 962.5,132.3 963.6,134.1 964.7,139.1 965.8,139.3 966.9,133.9 968.0,132.0 969.1,136.9 970.2,138.8 971.3,133.6 972.4,128.8 973.5,124.3 974.6,117.3 975.7,112.7 976.8,116.6 977.9,123.9 979.0,129.3 980.1,127.8 981.2,126.5 982.3,130.4 983.4,130.3 984.5,126.2 985.6,132.9 986.7,125.3 987.8,120.2 988.9,129.8 990.0,132.0 991.1,124.5 992.2,123.1 993.3,123.6 994.4,128.0 995.5,130.6 996.6,130.9 997.7,128.5 998.8,123.9 999.9,126.0 1001.0,134.2 1002.1,138.9 1003.2,136.4 1004.3,141.2 1005.4,136.1 1006.5,134.0 1007.6,133.5 1008.7,132.2 1009.8,136.4 1010.9,135.5 1012.0,140.9" fill="none" stroke="#f2f2f2" stroke-width="1.45" stroke-linejoin="round"/><rect x="505.4" y="0" width="1.1" height="189.5" fill="#f2f250"/></svg>
<div style="left:833px;top:112px;width:1013px;height:2px;background:#b4b4b4;"></div>
<div style="left:833px;top:302.0px;width:1013px;height:1.2px;background:#a8a8a8;"></div>
<div style="left:1844.5px;top:113px;width:1.6px;height:189.5px;background:#a8a8a8;"></div>
<div style="left:832.2px;top:112px;width:1.7px;height:191.5px;background:#d6483f;"></div>
<span style="left:785.10px;top:105.00px;font-size:16.7px;color:#fff;">40.0</span>
<span style="left:785.10px;top:143.00px;font-size:16.7px;color:#fff;">20.0</span>
<span style="left:794.39px;top:181.00px;font-size:16.7px;color:#fff;">0.0</span>
<span style="left:779.54px;top:219.00px;font-size:16.7px;color:#fff;">-20.0</span>
<span style="left:779.54px;top:257.00px;font-size:16.7px;color:#fff;">-40.0</span>
<span style="left:779.54px;top:295.00px;font-size:16.7px;color:#fff;">-60.0</span>
<span style="left:899.53px;top:309.00px;font-size:16.7px;color:#fff;">224.8</span>
<span style="left:1005.29px;top:309.00px;font-size:16.7px;color:#fff;">225</span>
<span style="left:1097.17px;top:309.00px;font-size:16.7px;color:#fff;">225.2</span>
<span style="left:1195.81px;top:309.00px;font-size:16.7px;color:#fff;">225.4</span>
<span style="left:1294.73px;top:309.00px;font-size:16.7px;color:#fff;">225.6</span>
<span style="left:1393.53px;top:309.00px;font-size:16.7px;color:#fff;">225.8</span>
<span style="left:1499.29px;top:309.00px;font-size:16.7px;color:#fff;">226</span>
<span style="left:1591.17px;top:309.00px;font-size:16.7px;color:#fff;">226.2</span>
<span style="left:1689.81px;top:309.00px;font-size:16.7px;color:#fff;">226.4</span>
<span style="left:1788.73px;top:309.00px;font-size:16.7px;color:#fff;">226.6</span>
<span style="left:1260.65px;top:333.00px;font-size:20px;color:#fff;letter-spacing:0.056px;">Frequency (MHz)</span>
<span style="left:677.00px;top:198.25px;font-size:19.5px;color:#fff;width:134.26px;transform:rotate(-90deg);transform-origin:67.00px 9.75px;letter-spacing:0.259px;">Magnitude (dB)</span>
<span style="left:12.40px;top:390.00px;font-size:20px;color:#fff;letter-spacing:-0.508px;font-style:italic;">DAB+</span>
<div style="left:83px;top:386px;width:75px;height:26px;background:transparent;border:1px solid #8a8a8a;border-radius:3px;box-sizing:border-box;"></div>
<span style="left:85.84px;top:391.00px;font-size:15.5px;color:#fff;letter-spacing:-0.306px;">12B</span>
<svg style="left:130px;top:393px;" width="16" height="12" viewBox="0 0 16 12"><path d="M2 2 H13.8 L7.9 9 Z" fill="#fff"/></svg>
<div style="left:171px;top:373px;width:1px;height:48px;background:#d8d8d8;"></div>
<div style="left:172px;top:373px;width:105px;height:48px;background:#b21616;"></div>
<span style="left:189.73px;top:390.00px;font-size:19px;color:#ff6a6a;letter-spacing:-0.217px;">EId: 10F2</span>
<span style="left:293.98px;top:390.00px;font-size:19px;color:#ffff00;letter-spacing:0.030px;">NDR SH</span>
<span style="left:390.55px;top:390.00px;font-size:19px;color:#fff;letter-spacing:0.626px;">2020-03-27</span>
<span style="left:504.33px;top:390.00px;font-size:19px;color:#fff;letter-spacing:-0.066px;">06:39:11 Z</span>
<div style="left:687px;top:386px;width:31px;height:27px;background:transparent;border:1px solid #8a8a8a;border-radius:3px;box-sizing:border-box;"></div>
<svg style="left:694px;top:393px;" width="16" height="12" viewBox="0 0 16 12"><path d="M2 2 H13.8 L7.9 9 Z" fill="#fff"/></svg>
<svg style="left:746px;top:384px;" width="76" height="32" viewBox="0 0 76 32"><circle cx="16" cy="16" r="14.4" fill="#1f64a0"/><circle cx="16" cy="16" r="6.2" fill="#ff0000"/><circle cx="59.75" cy="16" r="14" fill="#1e4268"/><rect x="53.5" y="10" width="12.3" height="12" fill="#0c0c0c"/></svg>
<span style="left:855.12px;top:391.00px;font-size:19.5px;color:#fff;letter-spacing:-0.701px;">SId: D4E1</span>
<span style="left:975.64px;top:382.00px;font-size:29.5px;color:#ffff00;letter-spacing:-0.580px;">NDR 1 SH</span>
<span style="left:1144.82px;top:391.00px;font-size:19.5px;color:#fff;letter-spacing:0.260px;">96 kbps</span>
<span style="left:1225.44px;top:391.00px;font-size:19.5px;color:#fff;letter-spacing:-0.764px;">EEP 2-A</span>
<svg style="left:1334px;top:380px;" width="28" height="38" viewBox="0 0 28 38"><path d="M3.1 11.3 H10.8 L22.3 3.4 V33.7 L10.8 25.8 H3.1 Z" fill="none" stroke="#f4f4f4" stroke-width="2" stroke-linejoin="miter"/><path d="M10.8 11.3 V25.8" stroke="#f4f4f4" stroke-width="2"/></svg>
<div style="left:1839.5px;top:385px;width:74px;height:25.5px;background:transparent;border:1px solid #8a8a8a;border-radius:3px;box-sizing:border-box;"></div>
<span style="left:1840.76px;top:389.00px;font-size:15.5px;color:#fff;letter-spacing:-0.413px;">DAB</span>
<svg style="left:1886px;top:391px;" width="16" height="12" viewBox="0 0 16 12"><path d="M2 2 H13.8 L7.9 9 Z" fill="#fff"/></svg>
<span style="left:5.75px;top:433.00px;font-size:25px;color:#ffff00;letter-spacing:-0.823px;">NDR 1 SH</span>
<div style="left:1px;top:468px;width:161px;height:31px;background:#4a7aa3;border:1px solid #b9d0e4;box-sizing:border-box;"></div>
<span style="left:6.92px;top:476.00px;font-size:19.8px;color:#fff;letter-spacing:-0.544px;">NDR 1 SH</span>
<span style="left:6.92px;top:507.00px;font-size:19.8px;color:#fff;letter-spacing:-0.544px;">NDR 2 SH</span>
<span style="left:6.92px;top:539.00px;font-size:19.8px;color:#fff;letter-spacing:-0.404px;">NDR Blue</span>
<span style="left:6.92px;top:571.00px;font-size:19.8px;color:#fff;letter-spacing:-0.202px;">NDR Info SH</span>
<span style="left:6.92px;top:602.00px;font-size:19.8px;color:#fff;letter-spacing:-0.150px;">NDR Info Spezial</span>
<span style="left:6.92px;top:634.00px;font-size:19.8px;color:#fff;letter-spacing:-0.087px;">NDR Kultur</span>
<span style="left:6.92px;top:665.00px;font-size:19.8px;color:#fff;letter-spacing:-0.606px;">NDR Plus</span>
<span style="left:6.92px;top:697.00px;font-size:19.8px;color:#fff;letter-spacing:-0.870px;">N-JOY</span>
<span style="left:6.92px;top:728.00px;font-size:19.8px;color:#fff;letter-spacing:-1.731px;">R.SH</span>
<span style="left:228.20px;top:434.00px;font-size:24.5px;color:#fff;letter-spacing:1.168px;">Service Quality</span>
<span style="left:234.68px;top:487.00px;font-size:18.3px;color:#fff;letter-spacing:-1.144px;">SNR (dB)</span>
<div style="left:384.7px;top:479.7px;width:50.5px;height:31px;background:#808080;"></div>
<div style="left:384.7px;top:479.7px;width:10px;height:31px;background:#ff0000;"></div>
<span style="left:399.55px;top:487.00px;font-size:15px;color:#fff;letter-spacing:-0.046px;">7.3</span>
<span style="left:234.04px;top:526.00px;font-size:18.3px;color:#fff;letter-spacing:-0.901px;">FIC (ok %)</span>
<div style="left:384.7px;top:518.15px;width:50.5px;height:31px;background:#808080;"></div>
<div style="left:384.7px;top:518.15px;width:26.3px;height:31px;background:#ffa500;"></div>
<span style="left:401.64px;top:526.00px;font-size:15px;color:#fff;letter-spacing:0.125px;">51</span>
<span style="left:234.04px;top:564.00px;font-size:18.3px;color:#fff;letter-spacing:-1.019px;">RS (ok %)</span>
<div style="left:384.7px;top:556.6px;width:50.5px;height:31px;background:#808080;"></div>
<span style="left:405.84px;top:565.00px;font-size:15px;color:#fff;">0</span>
<span style="left:234.04px;top:603.00px;font-size:18.3px;color:#fff;letter-spacing:-0.183px;">Null Symbol</span>
<div style="left:384.7px;top:595.05px;width:50.5px;height:31px;background:#808080;"></div>
<div style="left:384.7px;top:595.05px;width:50.5px;height:31px;background:#008000;"></div>
<span style="left:234.68px;top:642.00px;font-size:18.3px;color:#fff;letter-spacing:-0.662px;">SymbolTime (ms)</span>
<div style="left:384.7px;top:633.5px;width:50.5px;height:31px;background:#808080;"></div>
<div style="left:384.7px;top:633.5px;width:11.8px;height:31px;background:#008000;"></div>
<span style="left:395.90px;top:642.00px;font-size:15px;color:#fff;letter-spacing:-0.300px;">0.36</span>
<span style="left:234.04px;top:680.00px;font-size:18.3px;color:#fff;letter-spacing:-0.760px;">FrameTime (ms)</span>
<div style="left:384.7px;top:671.95px;width:50.5px;height:31px;background:#808080;"></div>
<div style="left:384.7px;top:671.95px;width:32.3px;height:31px;background:#008000;"></div>
<span style="left:395.75px;top:681.00px;font-size:15px;color:#fff;letter-spacing:-0.225px;">95.9</span>
<svg style="left:463px;top:432px;" width="74.5" height="34" viewBox="0 0 74.5 34"><path d="M0.5 34 V3 Q0.5 0.5 3 0.5 H61.5 A13 13 0 0 1 74.0 13 V34" fill="#848484" stroke="#a4a4a8" stroke-width="1"/></svg>
<span style="left:478.01px;top:441.00px;font-size:22px;color:#dadada;letter-spacing:-1.457px;">Sync</span>
<svg style="left:592px;top:432px;" width="88.5" height="34" viewBox="0 0 88.5 34"><path d="M0.5 34 V3 Q0.5 0.5 3 0.5 H75.5 A13 13 0 0 1 88.0 13 V34" fill="#848484" stroke="#a4a4a8" stroke-width="1"/></svg>
<span style="left:609.40px;top:441.00px;font-size:22px;color:#dadada;letter-spacing:-0.091px;">Audio</span>
<svg style="left:680.5px;top:432px;" width="72.5" height="34" viewBox="0 0 72.5 34"><path d="M0.5 34 V3 Q0.5 0.5 3 0.5 H59.5 A13 13 0 0 1 72.0 13 V34" fill="#848484" stroke="#a4a4a8" stroke-width="1"/></svg>
<span style="left:697.80px;top:441.00px;font-size:22px;color:#dadada;letter-spacing:-2.510px;">AAC</span>
<svg style="left:753px;top:432px;" width="108" height="34" viewBox="0 0 108 34"><path d="M0.5 34 V3 Q0.5 0.5 3 0.5 H95 A13 13 0 0 1 107.5 13 V34" fill="#848484" stroke="#a4a4a8" stroke-width="1"/></svg>
<span style="left:769.01px;top:441.00px;font-size:22px;color:#dadada;letter-spacing:0.023px;">Options</span>
<svg style="left:538px;top:432.5px;" width="54" height="34.5" viewBox="0 0 54 34.5"><path d="M0.5 34.5 V3 Q0.5 0.5 3 0.5 H41 A13 13 0 0 1 53.5 13 V34.5" fill="#1c5888" stroke="#8ab4d8" stroke-width="1"/></svg>
<span style="left:554.26px;top:441.00px;font-size:22px;color:#fff;letter-spacing:-1.395px;">TII</span>
<svg style="left:494px;top:476px;" width="52" height="17" viewBox="0 0 52 17"><circle cx="8" cy="8.4" r="6" fill="#ff0000"/><rect x="38.8" y="1.8" width="11.2" height="13.2" fill="#0f2b50"/></svg>
<div style="left:470.8px;top:503px;width:310.2px;height:1px;background:#9fb9d1;"></div>
<div style="left:793.3px;top:466px;width:1px;height:37.5px;background:#7fa3c2;"></div>
<span style="left:800.14px;top:490.00px;font-size:18px;color:#fff;letter-spacing:-0.336px;">Threshold</span>
<span style="left:470.56px;top:528.00px;font-size:18px;color:#fff;letter-spacing:0.468px;">Pattern</span>
<span style="left:554.56px;top:528.00px;font-size:18px;color:#fff;letter-spacing:1.063px;">MainId</span>
<span style="left:637.79px;top:528.00px;font-size:18px;color:#fff;letter-spacing:0.393px;">SubId</span>
<span style="left:709.99px;top:528.00px;font-size:18px;color:#fff;letter-spacing:0.581px;">Strength</span>
<div style="left:470.8px;top:548px;width:310.2px;height:1px;background:#b5c9dc;"></div>
<div style="left:833.3px;top:529px;width:3px;height:136px;background:#dfe3ee;border-radius:1.5px;"></div>
<div class="th" style="left:826.7px;top:662.0px;width:16px;height:16px"></div>
<span style="left:817.19px;top:690.00px;font-size:17.5px;color:#fff;letter-spacing:-0.413px;">0.02</span>
<span style="left:1288.78px;top:426.00px;font-size:18.5px;color:#fff;letter-spacing:-0.311px;">Channel Impulse Response (CIR)</span>
<div class="rd" style="left:937.8px;top:462.6px;width:16.5px;height:16.5px"></div>
<span style="left:958.26px;top:463.00px;font-size:15.5px;color:#fff;letter-spacing:-0.973px;">Freeze</span>
<div class="rd" style="left:1026.3px;top:462.6px;width:16.5px;height:16.5px"></div>
<span style="left:1047.22px;top:463.00px;font-size:15.5px;color:#fff;letter-spacing:-0.276px;">Gradient</span>
<span style="left:943.50px;top:515.00px;font-size:15.5px;color:#fff;letter-spacing:-0.308px;">Smoothing Level</span>
<div style="left:946.3px;top:538.2px;width:1px;height:5px;background:#c4c4c4;"></div>
<div style="left:962.65px;top:539.4px;width:1px;height:3.8px;background:#c4c4c4;"></div>
<div style="left:979.0px;top:539.4px;width:1px;height:3.8px;background:#c4c4c4;"></div>
<div style="left:995.3499999999999px;top:539.4px;width:1px;height:3.8px;background:#c4c4c4;"></div>
<div style="left:1011.6999999999999px;top:539.4px;width:1px;height:3.8px;background:#c4c4c4;"></div>
<div style="left:1028.05px;top:539.4px;width:1px;height:3.8px;background:#c4c4c4;"></div>
<div style="left:1044.3999999999999px;top:539.4px;width:1px;height:3.8px;background:#c4c4c4;"></div>
<div style="left:1060.75px;top:539.4px;width:1px;height:3.8px;background:#c4c4c4;"></div>
<div style="left:1077.1px;top:539.4px;width:1px;height:3.8px;background:#c4c4c4;"></div>
<div style="left:1093.45px;top:539.4px;width:1px;height:3.8px;background:#c4c4c4;"></div>
<div style="left:1109.8px;top:538.2px;width:1px;height:5px;background:#c4c4c4;"></div>
<div style="left:938.3px;top:550.0px;width:171.70000000000005px;height:2.8px;background:#e4e4e4;border-radius:1.4px;"></div>
<div class="th" style="left:1019.5px;top:543.4px;width:17px;height:17px"></div>
<span style="left:943.74px;top:582.00px;font-size:15.5px;color:#fff;letter-spacing:-0.348px;">Zoom X</span>
<div style="left:938.3px;top:612.6px;width:171.70000000000005px;height:2.8px;background:#e4e4e4;border-radius:1.4px;"></div>
<div class="th" style="left:937.8px;top:606.0px;width:17px;height:17px"></div>
<span style="left:943.74px;top:645.00px;font-size:15.5px;color:#fff;letter-spacing:-0.392px;">Zoom Y</span>
<div style="left:938.3px;top:674.8000000000001px;width:171.70000000000005px;height:2.8px;background:#e4e4e4;border-radius:1.4px;"></div>
<div class="th" style="left:937.8px;top:668.2px;width:17px;height:17px"></div>
<span style="left:943.85px;top:707.00px;font-size:15.5px;color:#fff;letter-spacing:-0.540px;">x-Axis</span>
<div style="left:1118px;top:449.5px;width:6px;height:207.5px;background:#ababab;border-radius:3px;"></div>
<div style="left:1131px;top:448px;width:1px;height:273px;background:#2e2e2e;"></div>
<svg style="left:1248px;top:468px;" width="619" height="195.29999999999995" viewBox="0 0 619 195.29999999999995"><rect x="27.8" y="0" width="1" height="195.3" fill="#9c9c9c"/><rect x="69.2" y="0" width="1" height="195.3" fill="#9c9c9c"/><rect x="110.5" y="0" width="1" height="195.3" fill="#9c9c9c"/><rect x="151.9" y="0" width="1" height="195.3" fill="#9c9c9c"/><rect x="193.3" y="0" width="1" height="195.3" fill="#9c9c9c"/><rect x="234.6" y="0" width="1" height="195.3" fill="#9c9c9c"/><rect x="276.0" y="0" width="1" height="195.3" fill="#9c9c9c"/><rect x="317.4" y="0" width="1" height="195.3" fill="#9c9c9c"/><rect x="358.8" y="0" width="1" height="195.3" fill="#9c9c9c"/><rect x="400.1" y="0" width="1" height="195.3" fill="#9c9c9c"/><rect x="441.5" y="0" width="1" height="195.3" fill="#9c9c9c"/><rect x="482.9" y="0" width="1" height="195.3" fill="#9c9c9c"/><rect x="524.2" y="0" width="1" height="195.3" fill="#9c9c9c"/><rect x="565.6" y="0" width="1" height="195.3" fill="#9c9c9c"/><rect x="607.0" y="0" width="1" height="195.3" fill="#9c9c9c"/><rect x="0" y="38.8" width="619" height="1.1" fill="#9c9c9c"/><rect x="0" y="77.9" width="619" height="1.1" fill="#9c9c9c"/><rect x="0" y="117.0" width="619" height="1.1" fill="#9c9c9c"/><rect x="0" y="156.1" width="619" height="1.1" fill="#9c9c9c"/><polyline points="1.0,134.8 2.2,137.7 3.5,133.2 4.8,136.0 6.0,128.7 7.2,131.4 8.5,127.4 9.8,136.1 11.0,138.3 12.2,137.9 13.5,138.5 14.8,144.3 16.0,146.2 17.2,152.7 18.5,153.7 19.8,141.8 21.0,136.5 22.2,126.8 23.5,117.2 24.8,117.9 26.0,125.6 27.2,127.8 28.5,124.1 29.8,123.3 31.0,125.0 32.2,132.5 33.5,139.6 34.8,138.4 36.0,141.2 37.2,143.4 38.5,148.5 39.8,142.0 41.0,132.2 42.2,130.9 43.5,139.5 44.8,145.4 46.0,147.4 47.2,154.7 48.5,144.6 49.8,143.9 51.0,142.8 52.2,141.3 53.5,144.3 54.8,146.2 56.0,145.5 57.2,139.9 58.5,134.8 59.8,136.4 61.0,132.7 62.2,134.1 63.5,136.0 64.8,142.1 66.0,144.2 67.2,136.0 68.5,136.8 69.8,133.7 71.0,141.2 72.2,139.0 73.5,143.0 74.8,139.8 76.0,140.4 77.2,134.4 78.5,131.4 79.8,127.7 81.0,129.9 82.2,130.7 83.5,132.0 84.8,133.7 86.0,148.1 87.2,157.6 88.5,134.9 89.8,128.6 91.0,125.7 92.2,125.5 93.5,139.7 94.8,150.6 96.0,156.2 97.2,149.1 98.5,142.3 99.8,136.6 101.0,131.2 102.2,124.7 103.5,123.8 104.8,124.2 106.0,130.0 107.2,141.5 108.5,142.8 109.8,142.1 111.0,133.9 112.2,130.0 113.5,126.4 114.8,129.5 116.0,135.0 117.2,139.5 118.5,141.6 119.8,132.9 121.0,140.5 122.2,134.0 123.5,138.2 124.8,128.6 126.0,132.7 127.2,133.9 128.5,131.6 129.8,137.1 131.0,142.0 132.2,136.5 133.5,136.4 134.8,130.5 136.0,129.1 137.2,116.1 138.5,92.6 139.8,79.1 141.0,105.9 142.2,123.9 143.5,124.3 144.8,125.1 146.0,125.1 147.2,124.8 148.5,122.0 149.8,117.0 151.0,100.8 152.2,67.3 153.5,58.7 154.8,89.3 156.0,114.7 157.2,120.5 158.5,123.0 159.8,125.5 161.0,134.4 162.2,134.0 163.5,133.1 164.8,126.4 166.0,131.3 167.2,122.4 168.5,137.4 169.8,139.6 171.0,138.2 172.2,136.9 173.5,134.0 174.8,129.9 176.0,132.6 177.2,126.6 178.5,130.6 179.8,132.2 181.0,134.4 182.2,137.3 183.5,132.1 184.8,134.6 186.0,132.0 187.2,130.6 188.5,131.6 189.8,138.6 191.0,150.0 192.2,130.8 193.5,125.7 194.8,138.7 196.0,138.2 197.2,140.8 198.5,122.6 199.8,111.0 201.0,118.8 202.2,130.0 203.5,137.3 204.8,134.3 206.0,133.8 207.2,128.0 208.5,132.6 209.8,136.6 211.0,140.2 212.2,141.5 213.5,136.0 214.8,137.7 216.0,129.9 217.2,122.7 218.5,123.5 219.8,124.2 221.0,127.8 222.2,128.5 223.5,133.0 224.8,133.5 226.0,123.4 227.2,131.5 228.5,140.6 229.8,137.1 231.0,134.8 232.2,133.7 233.5,141.7 234.8,140.9 236.0,137.7 237.2,139.4 238.5,145.3 239.8,140.2 241.0,135.6 242.2,133.8 243.5,138.5 244.8,141.4 246.0,140.5 247.2,142.8 248.5,145.1 249.8,138.9 251.0,121.0 252.2,134.5 253.5,136.1 254.8,135.5 256.0,130.7 257.2,141.0 258.5,135.6 259.8,140.6 261.0,142.4 262.2,149.6 263.5,139.9 264.8,139.9 266.0,138.3 267.2,146.4 268.5,148.2 269.8,150.2 271.0,139.3 272.2,136.9 273.5,132.2 274.8,136.8 276.0,136.9 277.2,136.3 278.5,141.7 279.8,141.2 281.0,142.8 282.2,141.1 283.5,142.1 284.8,140.3 286.0,129.7 287.2,125.4 288.5,127.5 289.8,109.5 291.0,89.0 292.2,107.6 293.5,126.5 294.8,142.8 296.0,140.0 297.2,138.8 298.5,135.4 299.8,139.5 301.0,143.4 302.2,146.1 303.5,142.2 304.8,151.9 306.0,139.9 307.2,141.6 308.5,144.6 309.8,150.3 311.0,153.0 312.2,151.7 313.5,145.8 314.8,141.3 316.0,146.1 317.2,140.1 318.5,135.7 319.8,132.5 321.0,135.3 322.2,135.4 323.5,132.5 324.8,131.5 326.0,130.8 327.2,130.6 328.5,133.8 329.8,133.7 331.0,133.4 332.2,131.8 333.5,130.0 334.8,133.7 336.0,133.2 337.2,138.9 338.5,134.3 339.8,144.3 341.0,139.3 342.2,141.7 343.5,133.5 344.8,136.7 346.0,137.8 347.2,136.7 348.5,134.0 349.8,136.4 351.0,138.5 352.2,141.5 353.5,131.7 354.8,131.3 356.0,126.2 357.2,135.6 358.5,142.2 359.8,138.6 361.0,134.1 362.2,126.6 363.5,133.4 364.8,138.2 366.0,136.8 367.2,138.1 368.5,136.5 369.8,142.8 371.0,140.2 372.2,141.2 373.5,136.9 374.8,134.0 376.0,129.2 377.2,131.2 378.5,132.2 379.8,133.1 381.0,132.8 382.2,136.2 383.5,129.4 384.8,138.6 386.0,136.5 387.2,136.1 388.5,136.8 389.8,141.8 391.0,139.5 392.2,137.3 393.5,135.2 394.8,134.7 396.0,142.7 397.2,138.7 398.5,143.5 399.8,147.5 401.0,150.8 402.2,146.2 403.5,145.8 404.8,137.3 406.0,137.5 407.2,144.5 408.5,148.8 409.8,145.4 411.0,143.9 412.2,136.5 413.5,144.9 414.8,145.8 416.0,149.2 417.2,138.2 418.5,136.5 419.8,133.3 421.0,134.4 422.2,131.5 423.5,128.2 424.8,128.8 426.0,131.9 427.2,138.6 428.5,136.6 429.8,135.0 431.0,137.3 432.2,143.1 433.5,140.1 434.8,138.6 436.0,137.3 437.2,140.6 438.5,142.6 439.8,138.4 441.0,139.4 442.2,134.3 443.5,138.8 444.8,136.8 446.0,131.0 447.2,122.1 448.5,121.8 449.8,128.5 451.0,136.6 452.2,136.0 453.5,138.9 454.8,134.6 456.0,138.2 457.2,135.4 458.5,127.5 459.8,121.7 461.0,127.1 462.2,131.5 463.5,136.9 464.8,131.1 466.0,135.2 467.2,133.6 468.5,136.7 469.8,135.1 471.0,135.6 472.2,136.6 473.5,132.2 474.8,131.1 476.0,131.5 477.2,138.3 478.5,138.8 479.8,139.0 481.0,138.4 482.2,144.0 483.5,145.8 484.8,144.0 486.0,139.5 487.2,140.5 488.5,138.5 489.8,138.8 491.0,131.8 492.2,130.6 493.5,134.4 494.8,138.4 496.0,142.9 497.2,139.2 498.5,138.4 499.8,140.0 501.0,123.1 502.2,82.8 503.5,75.9 504.8,114.9 506.0,133.0 507.2,134.6 508.5,139.7 509.8,142.3 511.0,141.7 512.2,143.8 513.5,138.4 514.8,132.6 516.0,132.3 517.2,132.0 518.5,139.2 519.8,138.2 521.0,151.6 522.2,150.5 523.5,143.1 524.8,141.5 526.0,142.9 527.2,152.1 528.5,149.5 529.8,146.1 531.0,138.8 532.2,135.1 533.5,133.8 534.8,130.5 536.0,126.1 537.2,128.8 538.5,134.7 539.8,136.4 541.0,136.4 542.2,135.5 543.5,136.7 544.8,141.8 546.0,135.1 547.2,127.6 548.5,91.1 549.8,74.4 551.0,107.6 552.2,136.1 553.5,138.1 554.8,132.9 556.0,137.1 557.2,139.9 558.5,139.5 559.8,137.6 561.0,132.7 562.2,135.7 563.5,136.6 564.8,137.9 566.0,126.1 567.2,107.5 568.5,103.8 569.8,123.0 571.0,126.5 572.2,131.6 573.5,134.1 574.8,132.9 576.0,130.3 577.2,128.4 578.5,134.8 579.8,143.9 581.0,151.9 582.2,153.8 583.5,151.1 584.8,145.1 586.0,139.0 587.2,130.0 588.5,134.7 589.8,136.8 591.0,137.0 592.2,136.0 593.5,135.6 594.8,141.7 596.0,140.1 597.2,138.0 598.5,119.1 599.8,134.1 601.0,129.2 602.2,138.2 603.5,136.6 604.8,136.2 606.0,133.6 607.2,133.3 608.5,135.5 609.8,133.8 611.0,139.4 612.2,135.3 613.5,137.3 614.8,135.4 616.0,138.3 617.2,139.3" fill="none" stroke="#f2f2f2" stroke-width="1.3" stroke-linejoin="round"/><path d="M139.4 0 V195.3" stroke="#e6e646" stroke-width="1.2" stroke-dasharray="1.2 1.2"/><circle cx="139.5" cy="74.6" r="5" fill="#e81010"/><circle cx="153.1" cy="51.8" r="5" fill="#ffee1a"/><circle cx="199.8" cy="105.8" r="5" fill="#8a2be2"/><circle cx="291.0" cy="84.4" r="5" fill="#1e9ae0"/></svg>
<div style="left:1247px;top:467px;width:621px;height:2px;background:#b0b0b0;"></div>
<div style="left:1247px;top:662.8px;width:621px;height:1.2px;background:#a6a6a6;"></div>
<div style="left:1247.5px;top:468px;width:1.2px;height:195.29999999999995px;background:#a0a0a0;"></div>
<div style="left:1866.5px;top:468px;width:2px;height:195.29999999999995px;background:#a6a6a6;"></div>
<span style="left:1214.19px;top:459.00px;font-size:16.7px;color:#fff;">0.0</span>
<span style="left:1199.34px;top:498.00px;font-size:16.7px;color:#fff;">-10.0</span>
<span style="left:1199.34px;top:538.00px;font-size:16.7px;color:#fff;">-20.0</span>
<span style="left:1199.34px;top:577.00px;font-size:16.7px;color:#fff;">-30.0</span>
<span style="left:1199.34px;top:616.00px;font-size:16.7px;color:#fff;">-40.0</span>
<span style="left:1199.34px;top:655.00px;font-size:16.7px;color:#fff;">-50.0</span>
<span style="left:1266.82px;top:670.00px;font-size:13.3px;color:#fff;letter-spacing:-0.166px;">-60</span>
<span style="left:1308.19px;top:670.00px;font-size:13.3px;color:#fff;letter-spacing:-0.166px;">-40</span>
<span style="left:1349.56px;top:670.00px;font-size:13.3px;color:#fff;letter-spacing:-0.166px;">-20</span>
<span style="left:1396.71px;top:670.00px;font-size:13.3px;color:#fff;">0</span>
<span style="left:1434.23px;top:670.00px;font-size:13.3px;color:#fff;letter-spacing:0.110px;">20</span>
<span style="left:1475.99px;top:670.00px;font-size:13.3px;color:#fff;letter-spacing:-0.289px;">40</span>
<span style="left:1516.97px;top:670.00px;font-size:13.3px;color:#fff;letter-spacing:0.110px;">60</span>
<span style="left:1558.47px;top:670.00px;font-size:13.3px;color:#fff;letter-spacing:-0.023px;">80</span>
<span style="left:1595.93px;top:670.00px;font-size:13.3px;color:#fff;letter-spacing:-0.037px;">100</span>
<span style="left:1637.30px;top:670.00px;font-size:13.3px;color:#fff;letter-spacing:-0.037px;">120</span>
<span style="left:1678.67px;top:670.00px;font-size:13.3px;color:#fff;letter-spacing:-0.037px;">140</span>
<span style="left:1720.04px;top:670.00px;font-size:13.3px;color:#fff;letter-spacing:-0.037px;">160</span>
<span style="left:1761.41px;top:670.00px;font-size:13.3px;color:#fff;letter-spacing:-0.037px;">180</span>
<span style="left:1803.12px;top:670.00px;font-size:13.3px;color:#fff;letter-spacing:-0.204px;">200</span>
<span style="left:1844.49px;top:670.00px;font-size:13.3px;color:#fff;letter-spacing:-0.204px;">220</span>
<span style="left:1463.18px;top:692.00px;font-size:16.5px;color:#fff;letter-spacing:0.314px;">Distance Difference (km)</span>
<span style="left:1115.75px;top:557.95px;font-size:15.5px;color:#fff;width:113.69px;transform:rotate(-90deg);transform-origin:56.75px 7.75px;letter-spacing:0.190px;font-weight:bold;">Magnitude (dB)</span>
<span style="left:1378.63px;top:731.00px;font-size:18.5px;color:#fff;letter-spacing:-0.362px;">TII Carriers</span>
<svg style="left:1035px;top:772px;" width="823.5" height="165.70000000000005" viewBox="0 0 823.5 165.70000000000005"><rect x="49.8" y="0" width="1" height="165.7" fill="#9c9c9c"/><rect x="130.3" y="0" width="1" height="165.7" fill="#9c9c9c"/><rect x="210.7" y="0" width="1" height="165.7" fill="#9c9c9c"/><rect x="291.2" y="0" width="1" height="165.7" fill="#9c9c9c"/><rect x="371.6" y="0" width="1" height="165.7" fill="#9c9c9c"/><rect x="452.1" y="0" width="1" height="165.7" fill="#9c9c9c"/><rect x="532.5" y="0" width="1" height="165.7" fill="#9c9c9c"/><rect x="613.0" y="0" width="1" height="165.7" fill="#9c9c9c"/><rect x="693.4" y="0" width="1" height="165.7" fill="#9c9c9c"/><rect x="773.9" y="0" width="1" height="165.7" fill="#9c9c9c"/><rect x="0" y="32.9" width="823.5" height="1.1" fill="#9c9c9c"/><rect x="0" y="66.0" width="823.5" height="1.1" fill="#9c9c9c"/><rect x="0" y="99.1" width="823.5" height="1.1" fill="#9c9c9c"/><rect x="0" y="132.3" width="823.5" height="1.1" fill="#9c9c9c"/><path d="M103.8 0 V165.7" stroke="#e4e43a" stroke-width="2" stroke-dasharray="2 2"/><path d="M258.5 0 V165.7" stroke="#e4e43a" stroke-width="2" stroke-dasharray="2 2"/><path d="M413.1 0 V165.7" stroke="#e4e43a" stroke-width="2" stroke-dasharray="2 2"/><path d="M567.7 0 V165.7" stroke="#e4e43a" stroke-width="2" stroke-dasharray="2 2"/><path d="M722.4 0 V165.7" stroke="#e4e43a" stroke-width="2" stroke-dasharray="2 2"/></svg>
<div style="left:1035px;top:771px;width:824.5px;height:2px;background:#b0b0b0;"></div>
<div style="left:1035px;top:936.7px;width:824.5px;height:2px;background:#a6a6a6;"></div>
<div style="left:1858.0px;top:772px;width:2px;height:165.70000000000005px;background:#a6a6a6;"></div>
<div style="left:1034.2px;top:771px;width:1.7px;height:167.70000000000005px;background:#e0453a;"></div>
<span style="left:999.09px;top:764.00px;font-size:16.7px;color:#fff;">1.0</span>
<span style="left:999.17px;top:797.00px;font-size:16.7px;color:#fff;">0.8</span>
<span style="left:999.17px;top:830.00px;font-size:16.7px;color:#fff;">0.6</span>
<span style="left:998.92px;top:863.00px;font-size:16.7px;color:#fff;">0.4</span>
<span style="left:999.26px;top:896.00px;font-size:16.7px;color:#fff;">0.2</span>
<span style="left:999.09px;top:929.00px;font-size:16.7px;color:#fff;">0.0</span>
<span style="left:1068.55px;top:944.00px;font-size:16.7px;color:#fff;">-900</span>
<span style="left:1149.01px;top:944.00px;font-size:16.7px;color:#fff;">-700</span>
<span style="left:1229.47px;top:944.00px;font-size:16.7px;color:#fff;">-500</span>
<span style="left:1309.92px;top:944.00px;font-size:16.7px;color:#fff;">-300</span>
<span style="left:1390.38px;top:944.00px;font-size:16.7px;color:#fff;">-100</span>
<span style="left:1473.32px;top:944.00px;font-size:16.7px;color:#fff;">100</span>
<span style="left:1554.11px;top:944.00px;font-size:16.7px;color:#fff;">300</span>
<span style="left:1634.53px;top:944.00px;font-size:16.7px;color:#fff;">500</span>
<span style="left:1714.90px;top:944.00px;font-size:16.7px;color:#fff;">700</span>
<span style="left:1795.40px;top:944.00px;font-size:16.7px;color:#fff;">900</span>
<span style="left:1396.17px;top:967.00px;font-size:16.5px;color:#fff;letter-spacing:0.200px;">TII Subcarrier</span>
<span style="left:936.00px;top:847.10px;font-size:15px;color:#fff;width:75.18px;transform:rotate(-90deg);transform-origin:37.50px 7.50px;letter-spacing:0.181px;font-weight:bold;">Magnitude</span>
<span style="left:1530.22px;top:1008.00px;font-size:16px;color:#fff;letter-spacing:-0.611px;">Display Update Rate</span>
<div style="left:1686px;top:1015.2px;width:179px;height:2.6px;background:#e4e4e4;border-radius:1.3px;"></div>
<div class="th" style="left:1678.2px;top:1008.5px;width:16px;height:16px"></div>
<span style="left:1877.00px;top:1008.00px;font-size:16px;color:#fff;letter-spacing:-0.907px;">2.0 s</span>
<svg style="left:20px;top:1045px;" width="20" height="20" viewBox="0 0 20 20"><path d="M0 3 L8.6 1.8 V9.4 H0 Z M9.8 1.6 L20 0.2 V9.4 H9.8 Z M0 10.6 H8.6 V18.2 L0 17 Z M9.8 10.6 H20 V19.8 L9.8 18.4 Z" fill="#fff"/></svg>
<svg style="left:78px;top:1043px;" width="24" height="24" viewBox="0 0 24 24"><circle cx="12" cy="12" r="8.9" fill="none" stroke="#fff" stroke-width="2.6"/></svg>
<svg style="left:138px;top:1041px;" width="22" height="28" viewBox="0 0 22 28"><path d="M2 2.5 H12 L14 4.5 V26 L2 23 Z" fill="#f6d36b"/><path d="M6 5.5 H20 V25.5 H6 Z" fill="#fbe39a"/><path d="M2 2.5 L6 5.5 V25.5 L2 23 Z" fill="#e9b94a"/></svg>
<span style="left:167.91px;top:1048.00px;font-size:15.8px;color:#fff;letter-spacing:-0.805px;">C:\MyOwnSt...</span>
<div style="left:129.5px;top:1077px;width:136px;height:3px;background:#76b9ed;"></div>
<svg style="left:282px;top:1040px;" width="34" height="33" viewBox="0 0 34 33"><rect x="11" y="1" width="20" height="20" fill="#1a8ae0"/><rect x="21" y="1" width="10" height="10" fill="#4fc3f7"/><rect x="11" y="11" width="10" height="10" fill="#0f5fb4"/><rect x="1" y="5" width="16" height="16" rx="1.5" fill="#0f6cbd"/><circle cx="9" cy="13" r="3.6" fill="none" stroke="#fff" stroke-width="2"/><rect x="14" y="18" width="19" height="13.5" fill="#f2b45c"/><path d="M14 18 L23.5 26 L33 18" fill="none" stroke="#fde2b0" stroke-width="1.4"/></svg>
<span style="left:316.08px;top:1048.00px;font-size:15.8px;color:#fff;letter-spacing:-0.574px;">Inbox - Fran...</span>
<div style="left:277px;top:1077px;width:137px;height:3px;background:#76b9ed;"></div>
<svg style="left:431px;top:1041px;" width="26" height="28" viewBox="0 0 26 28"><path d="M13 1.5 C8 1.5 6.3 6 6.3 10.5 C6.3 16 4.5 18.5 1.5 21 V22.5 H24.5 V21 C21.5 18.5 19.7 16 19.7 10.5 C19.7 6 18 1.5 13 1.5 Z" fill="#f3c37a"/><ellipse cx="13" cy="24.6" rx="3" ry="2" fill="#e0a555"/></svg>
<span style="left:462.56px;top:1048.00px;font-size:15.8px;color:#fff;letter-spacing:-0.604px;">1 Reminder(s)</span>
<div style="left:424.5px;top:1077px;width:135.5px;height:3px;background:#76b9ed;"></div>
<svg style="left:578px;top:1041px;" width="28" height="28" viewBox="0 0 28 28"><circle cx="14" cy="14" r="13.5" fill="#de4a3c"/><path d="M14 14 L2.3 7.2 A13.5 13.5 0 0 0 11 27.2 L16.5 17 Z" fill="#23a455"/><path d="M14 14 L25.7 7.3 A13.5 13.5 0 0 1 11 27.2 Z" fill="#fbcc3a"/><path d="M2.3 7.2 A13.5 13.5 0 0 1 25.7 7.3 L14 8 Z" fill="#de4a3c"/><circle cx="14" cy="14" r="6.3" fill="#f4f4f4"/><circle cx="14" cy="14" r="4.9" fill="#4a8af4"/></svg>
<span style="left:609.74px;top:1048.00px;font-size:15.8px;color:#fff;letter-spacing:-0.040px;">Digitalradio...</span>
<div style="left:571px;top:1077px;width:137px;height:3px;background:#76b9ed;"></div>
<svg style="left:726px;top:1039px;" width="32" height="30" viewBox="0 0 32 30"><ellipse cx="16" cy="15" rx="15" ry="6.5" transform="rotate(-32 16 15)" fill="none" stroke="#f2c230" stroke-width="2.2"/><path d="M27.5 17 H10.5 C11 21 14 23 17 23 C19.5 23 21.5 22 22.7 20 H27 C25.5 24.5 21.5 27.5 16.8 27.5 C10.5 27.5 5.5 22.5 5.5 16.2 C5.500 10 10.5 5 16.800 5 C23.5 5 28.2 10.5 27.500 17 Z M10.600 13.500 H22.600 C22 10.800 19.700 9.300 16.800 9.300 C13.800 9.300 11.300 10.800 10.600 13.500 Z" fill="#35b3ee"/></svg>
<svg style="left:782px;top:1040px;" width="31" height="29" viewBox="0 0 31 29"><rect x="8" y="1" width="22" height="27" rx="1.5" fill="#2b7cd3"/><rect x="8" y="1" width="22" height="7" fill="#41a5ee"/><rect x="8" y="14.5" width="22" height="7" fill="#185abd"/><rect x="8" y="21.5" width="22" height="6.5" fill="#103f91"/><rect x="1" y="7" width="15" height="15" rx="1.2" fill="#185abd"/><path d="M4 10.500 L6 18.500 L8.500 11.800 L11 18.500 L13 10.500" fill="none" stroke="#fff" stroke-width="1.6"/></svg>
<svg style="left:838px;top:1040px;" width="31" height="29" viewBox="0 0 31 29"><rect x="8" y="1" width="22" height="27" rx="1.5" fill="#21a366"/><rect x="19" y="1" width="11" height="9" fill="#33c481"/><rect x="8" y="10" width="11" height="9" fill="#107c41"/><rect x="8" y="19" width="22" height="9" fill="#185c37"/><rect x="1" y="7" width="15" height="15" rx="1.2" fill="#107c41"/><path d="M5 10.500 L12 18.500 M12 10.500 L5 18.500" stroke="#fff" stroke-width="1.8"/></svg>
<div style="left:883px;top:1030px;width:146px;height:50px;background:#3a4a5d;"></div>
<div style="left:883px;top:1077px;width:146px;height:3px;background:#76b9ed;"></div>
<svg style="left:894px;top:1041px;" width="28" height="26" viewBox="0 0 28 26"><g fill="none" stroke="#1414ff" stroke-width="2.500" stroke-linecap="round"><path d="M8.500 6 Q5.500 12.500 8.500 19"/><path d="M4 3 Q-0.500 12.500 4 22"/><path d="M19.500 6 Q22.500 12.500 19.500 19"/><path d="M24 3 Q28.500 12.500 24 22"/></g><path d="M16 3 L10.500 13.500 L13.800 13.500 L12 22.500 L17.800 11.500 L14.500 11.500 Z" fill="#f01818"/></svg>
<span style="left:926.29px;top:1048.00px;font-size:15.8px;color:#fff;letter-spacing:-1.270px;">QIRX SDR 2....</span>
<svg style="left:1040px;top:1042px;" width="29" height="24" viewBox="0 0 29 24"><rect x="1" y="1" width="27" height="22" fill="#e8e8e8"/><rect x="3" y="4" width="13" height="17" fill="#3f8a78"/><rect x="3" y="4" width="13" height="7" fill="#5aa08a"/><rect x="17.500" y="4" width="8.500" height="17" fill="#f6f6f6"/><rect x="24" y="4" width="2" height="9" fill="#4a8a80"/></svg>
<span style="left:1072.96px;top:1048.00px;font-size:15.8px;color:#fff;letter-spacing:-0.805px;">C:\MyOwnSt...</span>
<div style="left:1035px;top:1077px;width:136px;height:3px;background:#76b9ed;"></div>
<svg style="left:1185px;top:1038px;" width="34" height="33" viewBox="0 0 34 33"><g stroke="#f41212" stroke-width="6.5" stroke-linecap="round" fill="none"><path d="M16.500 18 L23.500 6 M16.500 18 L29.500 15.500 M16.500 18 L27.500 25.500 M16.500 18 L18.500 29.500 M16.500 18 L5 19.500 M16.500 18 L8 7.500"/></g><circle cx="16.500" cy="18" r="7.500" fill="#f41212"/><circle cx="29.500" cy="25.500" r="2.200" fill="#f41212"/><path d="M3.500 3 L9 4.500 L11.500 9 L6 8 Z" fill="#c01010"/><path d="M7 5.500 L10 7.500" stroke="#401010" stroke-width="1.200"/></svg>
<span style="left:1219.96px;top:1048.00px;font-size:15.8px;color:#fff;letter-spacing:-0.381px;">Clipboard01...</span>
<div style="left:1182px;top:1077px;width:136px;height:3px;background:#76b9ed;"></div>
<svg style="left:1334px;top:1044px;" width="17" height="22" viewBox="0 0 17 22"><path d="M1 1 H15.500 V13 L8.300 20.500 L1 13 Z" fill="#e9c54a"/><path d="M5.500 1 V16.500 M10.800 1 V16.800" stroke="#8a6d1a" stroke-width="1.2"/></svg>
<svg style="left:1363px;top:1048px;" width="18" height="14" viewBox="0 0 18 14"><rect x="0.500" y="0.500" width="17" height="12.500" fill="#f0c070"/><path d="M0.500 0.500 L9 8 L17.500 0.500" fill="none" stroke="#a87830" stroke-width="1.2"/></svg>
<svg style="left:1392px;top:1044px;" width="20" height="22" viewBox="0 0 20 22"><rect x="1" y="3" width="13" height="14" fill="#8a3aa8"/><path d="M4 14 V6.500 L10.500 14 V6.500" fill="none" stroke="#fff" stroke-width="1.500"/><path d="M9 3 L17 17 M17 3 L10 17" stroke="#e8e8e8" stroke-width="1.300"/><circle cx="9.500" cy="18.500" r="2" fill="none" stroke="#e8e8e8" stroke-width="1.200"/><circle cx="16.500" cy="18.500" r="2" fill="none" stroke="#e8e8e8" stroke-width="1.200"/></svg>
<svg style="left:1422px;top:1044px;" width="21" height="22" viewBox="0 0 21 22"><circle cx="9.500" cy="10" r="8.800" fill="#18a6e8"/><circle cx="9.500" cy="10" r="6" fill="#eaf6fd"/><path d="M12.200 7.300 C10.500 5.800 7 6.300 7.200 8.300 C7.400 10.300 12 9.700 12 12 C12 14 8.200 14.200 6.700 12.500" fill="none" stroke="#18a6e8" stroke-width="1.600"/><circle cx="15.500" cy="16.500" r="4.200" fill="#7ab648"/><path d="M13.500 16.500 L15 18 L17.600 15" fill="none" stroke="#fff" stroke-width="1.200"/></svg>
<svg style="left:1452px;top:1045px;" width="21" height="20" viewBox="0 0 21 20"><rect x="7" y="1" width="13" height="16" fill="#2a8ee6"/><rect x="13.500" y="1" width="6.500" height="6" fill="#58c4f8"/><rect x="7" y="11" width="13" height="6" fill="#0f5fb4"/><rect x="1" y="4" width="11" height="11" rx="1" fill="#0f6cbd"/><circle cx="6.500" cy="9.500" r="2.600" fill="none" stroke="#fff" stroke-width="1.500"/></svg>
<svg style="left:1481px;top:1047px;" width="23" height="15" viewBox="0 0 23 15"><path d="M5.500 14 C2.500 14 1 12 1 10 C1 8 2.500 6.500 4.500 6.500 C5 3.500 7.500 1.500 10.500 1.500 C13 1.500 15 3 16 5 C19.500 5 22 7 22 10 C22 12.500 20 14 18 14 Z" fill="#1e8fe0"/></svg>
<svg style="left:1511px;top:1044px;" width="21" height="21" viewBox="0 0 21 21"><circle cx="10.500" cy="10.500" r="9.800" fill="#3d78c0"/><path d="M4 5 C7 2 10 4 9 7 C8 10 4 10 3.500 13 C2 10 2.500 7 4 5 Z M11 11 C14 9 18 11 17 14 C16 17 13 19 11 17 C9.500 15 9.500 12.500 11 11 Z" fill="#5aa85a"/><path d="M4 4 A9.800 9.800 0 0 1 18 5 C13 3 8 4 4 9 Z" fill="#e8f0f8" opacity="0.800"/></svg>
<svg style="left:1542px;top:1046px;" width="21" height="18" viewBox="0 0 21 18"><path d="M1 3 L14 1 L19 13 L5 16 Z" fill="#d03a3a"/><path d="M1 5 L14 3 L17 15 L4 17 Z" fill="#4ac04a"/></svg>
<svg style="left:1572px;top:1044px;" width="21" height="22" viewBox="0 0 21 22"><rect x="0.500" y="0.500" width="19.500" height="20.500" fill="#8a78b8"/><rect x="2.500" y="2.500" width="15.500" height="11" fill="#d0d0d0"/><rect x="2.500" y="15" width="7" height="4" fill="#3a3a78"/><rect x="11" y="15" width="7" height="4" fill="#3a3a78"/></svg>
<svg style="left:1605px;top:1043px;" width="17" height="24" viewBox="0 0 17 24"><rect x="4.500" y="1" width="6" height="4.500" fill="none" stroke="#fff" stroke-width="1.100"/><rect x="2" y="5.500" width="11" height="15.500" rx="1.500" fill="none" stroke="#fff" stroke-width="1.200"/><path d="M9.500 19.500 L11.800 22 L16 17" fill="none" stroke="#ddd" stroke-width="1.100"/></svg>
<svg style="left:1634px;top:1045px;" width="19" height="19" viewBox="0 0 19 19"><g fill="none" stroke="#c8c8c8" stroke-width="1.300"><path d="M1.500 17 A15.500 15.500 0 0 1 17 1.500"/><path d="M6 17 A11 11 0 0 1 17 6"/><path d="M10.500 17 A6.500 6.500 0 0 1 17 10.500"/></g><circle cx="15.500" cy="15.800" r="1.800" fill="#fff"/></svg>
<svg style="left:1661px;top:1047px;" width="23" height="15" viewBox="0 0 23 15"><rect x="4.500" y="3" width="16.500" height="9.500" fill="#fff" stroke="#fff" stroke-width="1.200"/><rect x="21.500" y="5.500" width="1.500" height="4.500" fill="#fff"/><path d="M1 2 V5 M3.300 2 V5 M0 5 H4.300 V8 H2.200 V12" fill="none" stroke="#fff" stroke-width="1"/></svg>
<svg style="left:1691px;top:1045px;" width="23" height="20" viewBox="0 0 23 20"><path d="M1.500 7 H5 L10 2.500 V17.500 L5 13 H1.500 Z" fill="none" stroke="#fff" stroke-width="1.200"/><g fill="none" stroke="#fff" stroke-width="1.100"><path d="M12.500 7 Q14.500 10 12.500 13"/><path d="M15 4.500 Q18.500 10 15 15.500" opacity="0.600"/><path d="M17.800 2.500 Q22.500 10 17.800 17.500" opacity="0.450"/></g></svg>
<span style="left:1724.06px;top:1048.00px;font-size:15.5px;color:#fff;letter-spacing:-0.895px;">DEU</span>
<span style="left:1789.76px;top:1035.00px;font-size:15.3px;color:#fff;letter-spacing:-0.662px;">07:39</span>
<span style="left:1769.23px;top:1059.00px;font-size:15.3px;color:#fff;letter-spacing:0.082px;">27/03/2020</span>
<svg style="left:1868px;top:1044px;" width="22" height="22" viewBox="0 0 22 22"><path d="M1.500 1.500 H20.500 V16 H14 L11 19.500 L8 16 H1.500 Z" fill="none" stroke="#fff" stroke-width="1.300"/></svg>
<div style="left:1913.5px;top:1036px;width:1px;height:44px;background:#5a6a7a;"></div>
</div></body></html>
